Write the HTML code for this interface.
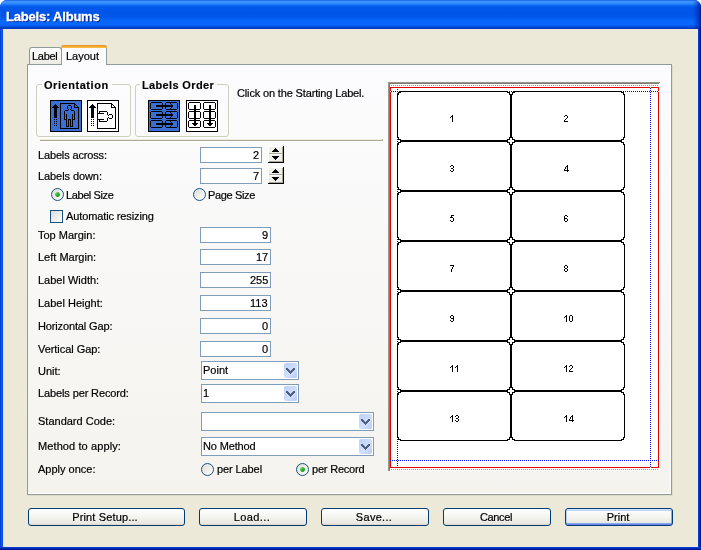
<!DOCTYPE html>
<html><head><meta charset="utf-8">
<style>
*{margin:0;padding:0;box-sizing:border-box}
html,body{width:701px;height:550px;overflow:hidden;background:#fff}
body{position:relative;font-family:"Liberation Sans",sans-serif;font-size:11px;color:#000}
.a{position:absolute}
.t{position:absolute;white-space:nowrap;line-height:13px;letter-spacing:0px;will-change:transform;-webkit-text-stroke:0.2px #000}
#win{left:0;top:0;width:701px;height:550px;background:#0846D8;border-radius:7px 7px 0 0;overflow:hidden}
#title{left:0;top:0;width:701px;height:29px;background:linear-gradient(to bottom,#0a48dc 0px,#3d95ff 1px,#3a90fd 3px,#156ff4 5px,#0058eb 7px,#0055e6 13px,#0058eb 17px,#0866fc 21px,#0866fb 25px,#004ad8 27px,#0032b4 29px)}
#face{left:3px;top:29px;width:695px;height:518px;background:#ECE9D8}
#lb{left:0;top:29px;width:3px;height:521px;background:linear-gradient(to right,#0030c8,#0a5ef0 50%,#0848dc)}
#rb{left:698px;top:29px;width:3px;height:521px;background:linear-gradient(to right,#0a46e0,#0026b4 50%,#000f8a)}
#bb{left:0;top:547px;width:701px;height:3px;background:linear-gradient(to bottom,#0a46e0,#0026b4 50%,#000f8a)}
.ttl{-webkit-text-stroke:0.3px #fff;color:#fff;font-weight:bold;font-size:13px;letter-spacing:-0.2px;text-shadow:1px 1px 0 #0a1e8c}
#panel{left:27px;top:64px;width:645px;height:431px;border:1px solid #919B9C;background:linear-gradient(to bottom,#fcfcfe,#f4f3ee);box-shadow:inset -1px -1px 0 #fff,1px 1px 0 #dedbca}
.tab{position:absolute;border:1px solid #919B9C;border-bottom:none;border-radius:3px 3px 0 0}
.grp{position:absolute;border:1px solid #D0D0BF;border-radius:3px}
.gl{position:absolute;white-space:nowrap;font-weight:bold;line-height:13px;letter-spacing:0.35px;background:#fbfbfc;padding:0 3px 0 2px;will-change:transform;-webkit-text-stroke:0.15px #000}
.edit{position:absolute;border:1px solid #7F9DB9;background:#fff;height:16px}
.ev{position:absolute;right:2px;top:1px;line-height:13px;will-change:transform;-webkit-text-stroke:0.2px #000}
.combo{position:absolute;border:1px solid #7F9DB9;background:#fff;height:19px}
.cbtn{position:absolute;right:1px;top:1px;width:13px;height:15px;border-radius:2px;background:linear-gradient(135deg,#bccff8,#d2e0fc 60%,#b3c8f5)}
.btn{position:absolute;top:508px;height:18px;border:1px solid #003C74;border-radius:3px;background:linear-gradient(to bottom,#ffffff,#f4f4f0 50%,#e9e8e1 90%,#d8d2c0);text-align:center;line-height:17px;padding-right:2px;will-change:transform;-webkit-text-stroke:0.2px #000}
.radio{position:absolute;width:13px;height:13px;border:1px solid #1C5180;border-radius:50%;background:linear-gradient(135deg,#dcdcd7,#f8f8f6 80%,#fff)}
.dot{position:absolute;left:3px;top:3px;width:5px;height:5px;clip-path:polygon(50% -15%,115% 50%,50% 115%,-15% 50%);background:linear-gradient(135deg,#8ee88e,#2fb52f 50%,#0f8f0f)}
.num{position:absolute;font-size:10px;line-height:12px;white-space:nowrap;will-change:transform;-webkit-text-stroke:0.2px #000}
</style></head><body>
<div id="win" class="a"><div id="title" class="a"></div><div id="lb" class="a"></div><div id="rb" class="a"></div><div id="bb" class="a"></div><div id="face" class="a"></div>
<div class="a" style="left:693px;top:0;width:8px;height:29px;background:linear-gradient(to right,rgba(0,30,160,0),rgba(0,30,160,.55) 70%,rgba(0,16,130,.9))"></div>
<div class="t ttl" style="left:6px;top:10px">Labels: Albums</div></div>
<div id="panel" class="a"></div>
<div class="tab" style="left:29px;top:47px;width:33px;height:17px;background:linear-gradient(to bottom,#fff,#f3f2ec 70%,#ebeae4)"></div>
<div class="t" style="left:32px;top:50px;letter-spacing:-0.3px">Label</div>
<div class="tab" style="left:61px;top:45px;width:46px;height:20px;background:#fcfcfe;border-top:none"></div>
<div class="a" style="left:61px;top:45px;width:46px;height:3px;background:linear-gradient(to bottom,#e68b2c,#ffc73c);border-radius:3px 3px 0 0"></div>
<div class="t" style="left:66px;top:50px">Layout</div>
<div class="grp" style="left:36px;top:84px;width:95px;height:53px"></div>
<div class="gl" style="left:42px;top:79px;letter-spacing:0.55px">Orientation</div>
<div class="grp" style="left:135px;top:84px;width:94px;height:53px"></div>
<div class="gl" style="left:140px;top:79px">Labels Order</div>
<!-- icons -->
<svg class="a" style="left:50px;top:100px" width="32" height="32" shape-rendering="crispEdges"><rect width="32" height="32" fill="#000"/><rect x="1" y="1" width="30" height="30" fill="#3a6fd6"/><path d="M5 4h1v1h-1zM4 5h1v1h-1zM5 5h1v1h-1zM6 5h1v1h-1zM3 6h1v1h-1zM4 6h1v1h-1zM5 6h1v1h-1zM6 6h1v1h-1zM7 6h1v1h-1zM2 7h1v1h-1zM3 7h1v1h-1zM4 7h1v1h-1zM5 7h1v1h-1zM6 7h1v1h-1zM7 7h1v1h-1zM8 7h1v1h-1zM4 8h1v1h-1zM5 8h1v1h-1zM6 8h1v1h-1zM4 9h1v1h-1zM5 9h1v1h-1zM6 9h1v1h-1zM4 10h1v1h-1zM5 10h1v1h-1zM6 10h1v1h-1zM4 11h1v1h-1zM5 11h1v1h-1zM6 11h1v1h-1zM4 12h1v1h-1zM5 12h1v1h-1zM6 12h1v1h-1zM4 13h1v1h-1zM5 13h1v1h-1zM6 13h1v1h-1zM4 14h1v1h-1zM5 14h1v1h-1zM6 14h1v1h-1zM4 15h1v1h-1zM5 15h1v1h-1zM6 15h1v1h-1zM4 16h1v1h-1zM5 16h1v1h-1zM6 16h1v1h-1zM4 17h1v1h-1zM5 17h1v1h-1zM6 17h1v1h-1zM4 19h1v1h-1zM6 19h1v1h-1zM4 21h1v1h-1zM6 21h1v1h-1zM4 23h1v1h-1zM6 23h1v1h-1zM4 25h1v1h-1zM6 25h1v1h-1zM10 3h1v1h-1zM10 4h1v1h-1zM10 5h1v1h-1zM10 6h1v1h-1zM10 7h1v1h-1zM10 8h1v1h-1zM10 9h1v1h-1zM10 10h1v1h-1zM10 11h1v1h-1zM10 12h1v1h-1zM10 13h1v1h-1zM10 14h1v1h-1zM10 15h1v1h-1zM10 16h1v1h-1zM10 17h1v1h-1zM10 18h1v1h-1zM10 19h1v1h-1zM10 20h1v1h-1zM10 21h1v1h-1zM10 22h1v1h-1zM10 23h1v1h-1zM10 24h1v1h-1zM10 25h1v1h-1zM10 26h1v1h-1zM10 27h1v1h-1zM10 28h1v1h-1zM10 3h1v1h-1zM11 3h1v1h-1zM12 3h1v1h-1zM13 3h1v1h-1zM14 3h1v1h-1zM15 3h1v1h-1zM16 3h1v1h-1zM17 3h1v1h-1zM18 3h1v1h-1zM19 3h1v1h-1zM20 3h1v1h-1zM21 3h1v1h-1zM22 3h1v1h-1zM23 3h1v1h-1zM24 3h1v1h-1zM24 3h1v1h-1zM24 4h1v1h-1zM24 5h1v1h-1zM24 6h1v1h-1zM24 7h1v1h-1zM24 7h1v1h-1zM25 7h1v1h-1zM26 7h1v1h-1zM27 7h1v1h-1zM25 4h1v1h-1zM26 5h1v1h-1zM27 6h1v1h-1zM28 7h1v1h-1zM28 8h1v1h-1zM28 9h1v1h-1zM28 10h1v1h-1zM28 11h1v1h-1zM28 12h1v1h-1zM28 13h1v1h-1zM28 14h1v1h-1zM28 15h1v1h-1zM28 16h1v1h-1zM28 17h1v1h-1zM28 18h1v1h-1zM28 19h1v1h-1zM28 20h1v1h-1zM28 21h1v1h-1zM28 22h1v1h-1zM28 23h1v1h-1zM28 24h1v1h-1zM28 25h1v1h-1zM28 26h1v1h-1zM28 27h1v1h-1zM28 28h1v1h-1zM10 28h1v1h-1zM11 28h1v1h-1zM12 28h1v1h-1zM13 28h1v1h-1zM14 28h1v1h-1zM15 28h1v1h-1zM16 28h1v1h-1zM17 28h1v1h-1zM18 28h1v1h-1zM19 28h1v1h-1zM20 28h1v1h-1zM21 28h1v1h-1zM22 28h1v1h-1zM23 28h1v1h-1zM24 28h1v1h-1zM25 28h1v1h-1zM26 28h1v1h-1zM27 28h1v1h-1zM28 28h1v1h-1zM18 5h1v1h-1zM19 5h1v1h-1zM20 5h1v1h-1zM17 6h1v1h-1zM17 7h1v1h-1zM17 8h1v1h-1zM21 6h1v1h-1zM21 7h1v1h-1zM21 8h1v1h-1zM18 9h1v1h-1zM20 9h1v1h-1zM15 10h1v1h-1zM16 10h1v1h-1zM17 10h1v1h-1zM21 10h1v1h-1zM22 10h1v1h-1zM23 10h1v1h-1zM14 11h1v1h-1zM14 12h1v1h-1zM14 13h1v1h-1zM14 14h1v1h-1zM14 15h1v1h-1zM14 16h1v1h-1zM14 17h1v1h-1zM14 18h1v1h-1zM14 19h1v1h-1zM24 11h1v1h-1zM24 12h1v1h-1zM24 13h1v1h-1zM24 14h1v1h-1zM24 15h1v1h-1zM24 16h1v1h-1zM24 17h1v1h-1zM24 18h1v1h-1zM24 19h1v1h-1zM14 19h1v1h-1zM15 19h1v1h-1zM16 19h1v1h-1zM22 19h1v1h-1zM23 19h1v1h-1zM24 19h1v1h-1zM16 14h1v1h-1zM16 15h1v1h-1zM16 16h1v1h-1zM16 17h1v1h-1zM16 18h1v1h-1zM16 19h1v1h-1zM16 20h1v1h-1zM16 21h1v1h-1zM16 22h1v1h-1zM16 23h1v1h-1zM16 24h1v1h-1zM16 25h1v1h-1zM16 26h1v1h-1zM22 14h1v1h-1zM22 15h1v1h-1zM22 16h1v1h-1zM22 17h1v1h-1zM22 18h1v1h-1zM22 19h1v1h-1zM22 20h1v1h-1zM22 21h1v1h-1zM22 22h1v1h-1zM22 23h1v1h-1zM22 24h1v1h-1zM22 25h1v1h-1zM22 26h1v1h-1zM18 19h1v1h-1zM19 19h1v1h-1zM20 19h1v1h-1zM18 19h1v1h-1zM18 20h1v1h-1zM18 21h1v1h-1zM18 22h1v1h-1zM18 23h1v1h-1zM18 24h1v1h-1zM18 25h1v1h-1zM18 26h1v1h-1zM20 19h1v1h-1zM20 20h1v1h-1zM20 21h1v1h-1zM20 22h1v1h-1zM20 23h1v1h-1zM20 24h1v1h-1zM20 25h1v1h-1zM20 26h1v1h-1zM16 26h1v1h-1zM17 26h1v1h-1zM18 26h1v1h-1zM20 26h1v1h-1zM21 26h1v1h-1zM22 26h1v1h-1z" fill="#000"/></svg>
<svg class="a" style="left:87px;top:100px" width="32" height="32" shape-rendering="crispEdges"><rect width="32" height="32" fill="#000"/><rect x="1" y="1" width="30" height="30" fill="#fff"/><path d="M5 4h1v1h-1zM4 5h1v1h-1zM5 5h1v1h-1zM6 5h1v1h-1zM3 6h1v1h-1zM4 6h1v1h-1zM5 6h1v1h-1zM6 6h1v1h-1zM7 6h1v1h-1zM2 7h1v1h-1zM3 7h1v1h-1zM4 7h1v1h-1zM5 7h1v1h-1zM6 7h1v1h-1zM7 7h1v1h-1zM8 7h1v1h-1zM4 8h1v1h-1zM5 8h1v1h-1zM6 8h1v1h-1zM4 9h1v1h-1zM5 9h1v1h-1zM6 9h1v1h-1zM4 10h1v1h-1zM5 10h1v1h-1zM6 10h1v1h-1zM4 11h1v1h-1zM5 11h1v1h-1zM6 11h1v1h-1zM4 12h1v1h-1zM5 12h1v1h-1zM6 12h1v1h-1zM4 13h1v1h-1zM5 13h1v1h-1zM6 13h1v1h-1zM4 14h1v1h-1zM5 14h1v1h-1zM6 14h1v1h-1zM4 15h1v1h-1zM5 15h1v1h-1zM6 15h1v1h-1zM4 16h1v1h-1zM5 16h1v1h-1zM6 16h1v1h-1zM4 17h1v1h-1zM5 17h1v1h-1zM6 17h1v1h-1zM4 19h1v1h-1zM6 19h1v1h-1zM4 21h1v1h-1zM6 21h1v1h-1zM4 23h1v1h-1zM6 23h1v1h-1zM4 25h1v1h-1zM6 25h1v1h-1zM10 3h1v1h-1zM10 4h1v1h-1zM10 5h1v1h-1zM10 6h1v1h-1zM10 7h1v1h-1zM10 8h1v1h-1zM10 9h1v1h-1zM10 10h1v1h-1zM10 11h1v1h-1zM10 12h1v1h-1zM10 13h1v1h-1zM10 14h1v1h-1zM10 15h1v1h-1zM10 16h1v1h-1zM10 17h1v1h-1zM10 18h1v1h-1zM10 19h1v1h-1zM10 20h1v1h-1zM10 21h1v1h-1zM10 22h1v1h-1zM10 23h1v1h-1zM10 24h1v1h-1zM10 25h1v1h-1zM10 26h1v1h-1zM10 27h1v1h-1zM10 28h1v1h-1zM10 3h1v1h-1zM11 3h1v1h-1zM12 3h1v1h-1zM13 3h1v1h-1zM14 3h1v1h-1zM15 3h1v1h-1zM16 3h1v1h-1zM17 3h1v1h-1zM18 3h1v1h-1zM19 3h1v1h-1zM20 3h1v1h-1zM21 3h1v1h-1zM22 3h1v1h-1zM23 3h1v1h-1zM24 3h1v1h-1zM24 3h1v1h-1zM24 4h1v1h-1zM24 5h1v1h-1zM24 6h1v1h-1zM24 7h1v1h-1zM24 7h1v1h-1zM25 7h1v1h-1zM26 7h1v1h-1zM27 7h1v1h-1zM25 4h1v1h-1zM26 5h1v1h-1zM27 6h1v1h-1zM28 7h1v1h-1zM28 8h1v1h-1zM28 9h1v1h-1zM28 10h1v1h-1zM28 11h1v1h-1zM28 12h1v1h-1zM28 13h1v1h-1zM28 14h1v1h-1zM28 15h1v1h-1zM28 16h1v1h-1zM28 17h1v1h-1zM28 18h1v1h-1zM28 19h1v1h-1zM28 20h1v1h-1zM28 21h1v1h-1zM28 22h1v1h-1zM28 23h1v1h-1zM28 24h1v1h-1zM28 25h1v1h-1zM28 26h1v1h-1zM28 27h1v1h-1zM28 28h1v1h-1zM10 28h1v1h-1zM11 28h1v1h-1zM12 28h1v1h-1zM13 28h1v1h-1zM14 28h1v1h-1zM15 28h1v1h-1zM16 28h1v1h-1zM17 28h1v1h-1zM18 28h1v1h-1zM19 28h1v1h-1zM20 28h1v1h-1zM21 28h1v1h-1zM22 28h1v1h-1zM23 28h1v1h-1zM24 28h1v1h-1zM25 28h1v1h-1zM26 28h1v1h-1zM27 28h1v1h-1zM28 28h1v1h-1zM12 11h1v1h-1zM13 11h1v1h-1zM14 11h1v1h-1zM15 11h1v1h-1zM16 11h1v1h-1zM17 11h1v1h-1zM18 11h1v1h-1zM19 11h1v1h-1zM12 12h1v1h-1zM20 12h1v1h-1zM11 13h1v1h-1zM12 13h1v1h-1zM13 13h1v1h-1zM14 13h1v1h-1zM15 13h1v1h-1zM16 13h1v1h-1zM20 13h1v1h-1zM20 14h1v1h-1zM22 14h1v1h-1zM23 14h1v1h-1zM24 14h1v1h-1zM21 15h1v1h-1zM25 15h1v1h-1zM25 16h1v1h-1zM21 17h1v1h-1zM25 17h1v1h-1zM20 18h1v1h-1zM22 18h1v1h-1zM23 18h1v1h-1zM24 18h1v1h-1zM11 19h1v1h-1zM12 19h1v1h-1zM13 19h1v1h-1zM14 19h1v1h-1zM15 19h1v1h-1zM16 19h1v1h-1zM20 19h1v1h-1zM12 20h1v1h-1zM20 20h1v1h-1zM12 21h1v1h-1zM13 21h1v1h-1zM14 21h1v1h-1zM15 21h1v1h-1zM16 21h1v1h-1zM17 21h1v1h-1zM18 21h1v1h-1zM19 21h1v1h-1z" fill="#000"/></svg>
<svg class="a" style="left:148px;top:100px" width="32" height="32" shape-rendering="crispEdges"><rect width="32" height="32" fill="#000"/><rect x="1" y="1" width="30" height="30" fill="#3a6fd6"/><path d="M3 2h1v1h-1zM4 2h1v1h-1zM5 2h1v1h-1zM6 2h1v1h-1zM7 2h1v1h-1zM8 2h1v1h-1zM9 2h1v1h-1zM10 2h1v1h-1zM11 2h1v1h-1zM12 2h1v1h-1zM13 2h1v1h-1zM3 9h1v1h-1zM4 9h1v1h-1zM5 9h1v1h-1zM6 9h1v1h-1zM7 9h1v1h-1zM8 9h1v1h-1zM9 9h1v1h-1zM10 9h1v1h-1zM11 9h1v1h-1zM12 9h1v1h-1zM13 9h1v1h-1zM2 3h1v1h-1zM2 4h1v1h-1zM2 5h1v1h-1zM2 6h1v1h-1zM2 7h1v1h-1zM2 8h1v1h-1zM14 3h1v1h-1zM14 4h1v1h-1zM14 5h1v1h-1zM14 6h1v1h-1zM14 7h1v1h-1zM14 8h1v1h-1zM18 2h1v1h-1zM19 2h1v1h-1zM20 2h1v1h-1zM21 2h1v1h-1zM22 2h1v1h-1zM23 2h1v1h-1zM24 2h1v1h-1zM25 2h1v1h-1zM26 2h1v1h-1zM27 2h1v1h-1zM28 2h1v1h-1zM18 9h1v1h-1zM19 9h1v1h-1zM20 9h1v1h-1zM21 9h1v1h-1zM22 9h1v1h-1zM23 9h1v1h-1zM24 9h1v1h-1zM25 9h1v1h-1zM26 9h1v1h-1zM27 9h1v1h-1zM28 9h1v1h-1zM17 3h1v1h-1zM17 4h1v1h-1zM17 5h1v1h-1zM17 6h1v1h-1zM17 7h1v1h-1zM17 8h1v1h-1zM29 3h1v1h-1zM29 4h1v1h-1zM29 5h1v1h-1zM29 6h1v1h-1zM29 7h1v1h-1zM29 8h1v1h-1zM8 5h1v1h-1zM9 5h1v1h-1zM10 5h1v1h-1zM11 5h1v1h-1zM12 5h1v1h-1zM13 5h1v1h-1zM14 5h1v1h-1zM15 5h1v1h-1zM16 5h1v1h-1zM17 5h1v1h-1zM18 5h1v1h-1zM19 5h1v1h-1zM20 5h1v1h-1zM21 5h1v1h-1zM22 5h1v1h-1zM23 5h1v1h-1zM24 5h1v1h-1zM8 6h1v1h-1zM9 6h1v1h-1zM10 6h1v1h-1zM11 6h1v1h-1zM12 6h1v1h-1zM13 6h1v1h-1zM14 6h1v1h-1zM15 6h1v1h-1zM16 6h1v1h-1zM17 6h1v1h-1zM18 6h1v1h-1zM19 6h1v1h-1zM20 6h1v1h-1zM21 6h1v1h-1zM22 6h1v1h-1zM23 6h1v1h-1zM24 6h1v1h-1zM22 3h1v1h-1zM23 4h1v1h-1zM24 5h1v1h-1zM24 6h1v1h-1zM23 7h1v1h-1zM22 8h1v1h-1zM3 11h1v1h-1zM4 11h1v1h-1zM5 11h1v1h-1zM6 11h1v1h-1zM7 11h1v1h-1zM8 11h1v1h-1zM9 11h1v1h-1zM10 11h1v1h-1zM11 11h1v1h-1zM12 11h1v1h-1zM13 11h1v1h-1zM3 18h1v1h-1zM4 18h1v1h-1zM5 18h1v1h-1zM6 18h1v1h-1zM7 18h1v1h-1zM8 18h1v1h-1zM9 18h1v1h-1zM10 18h1v1h-1zM11 18h1v1h-1zM12 18h1v1h-1zM13 18h1v1h-1zM2 12h1v1h-1zM2 13h1v1h-1zM2 14h1v1h-1zM2 15h1v1h-1zM2 16h1v1h-1zM2 17h1v1h-1zM14 12h1v1h-1zM14 13h1v1h-1zM14 14h1v1h-1zM14 15h1v1h-1zM14 16h1v1h-1zM14 17h1v1h-1zM18 11h1v1h-1zM19 11h1v1h-1zM20 11h1v1h-1zM21 11h1v1h-1zM22 11h1v1h-1zM23 11h1v1h-1zM24 11h1v1h-1zM25 11h1v1h-1zM26 11h1v1h-1zM27 11h1v1h-1zM28 11h1v1h-1zM18 18h1v1h-1zM19 18h1v1h-1zM20 18h1v1h-1zM21 18h1v1h-1zM22 18h1v1h-1zM23 18h1v1h-1zM24 18h1v1h-1zM25 18h1v1h-1zM26 18h1v1h-1zM27 18h1v1h-1zM28 18h1v1h-1zM17 12h1v1h-1zM17 13h1v1h-1zM17 14h1v1h-1zM17 15h1v1h-1zM17 16h1v1h-1zM17 17h1v1h-1zM29 12h1v1h-1zM29 13h1v1h-1zM29 14h1v1h-1zM29 15h1v1h-1zM29 16h1v1h-1zM29 17h1v1h-1zM8 14h1v1h-1zM9 14h1v1h-1zM10 14h1v1h-1zM11 14h1v1h-1zM12 14h1v1h-1zM13 14h1v1h-1zM14 14h1v1h-1zM15 14h1v1h-1zM16 14h1v1h-1zM17 14h1v1h-1zM18 14h1v1h-1zM19 14h1v1h-1zM20 14h1v1h-1zM21 14h1v1h-1zM22 14h1v1h-1zM23 14h1v1h-1zM24 14h1v1h-1zM8 15h1v1h-1zM9 15h1v1h-1zM10 15h1v1h-1zM11 15h1v1h-1zM12 15h1v1h-1zM13 15h1v1h-1zM14 15h1v1h-1zM15 15h1v1h-1zM16 15h1v1h-1zM17 15h1v1h-1zM18 15h1v1h-1zM19 15h1v1h-1zM20 15h1v1h-1zM21 15h1v1h-1zM22 15h1v1h-1zM23 15h1v1h-1zM24 15h1v1h-1zM22 12h1v1h-1zM23 13h1v1h-1zM24 14h1v1h-1zM24 15h1v1h-1zM23 16h1v1h-1zM22 17h1v1h-1zM3 20h1v1h-1zM4 20h1v1h-1zM5 20h1v1h-1zM6 20h1v1h-1zM7 20h1v1h-1zM8 20h1v1h-1zM9 20h1v1h-1zM10 20h1v1h-1zM11 20h1v1h-1zM12 20h1v1h-1zM13 20h1v1h-1zM3 27h1v1h-1zM4 27h1v1h-1zM5 27h1v1h-1zM6 27h1v1h-1zM7 27h1v1h-1zM8 27h1v1h-1zM9 27h1v1h-1zM10 27h1v1h-1zM11 27h1v1h-1zM12 27h1v1h-1zM13 27h1v1h-1zM2 21h1v1h-1zM2 22h1v1h-1zM2 23h1v1h-1zM2 24h1v1h-1zM2 25h1v1h-1zM2 26h1v1h-1zM14 21h1v1h-1zM14 22h1v1h-1zM14 23h1v1h-1zM14 24h1v1h-1zM14 25h1v1h-1zM14 26h1v1h-1zM18 20h1v1h-1zM19 20h1v1h-1zM20 20h1v1h-1zM21 20h1v1h-1zM22 20h1v1h-1zM23 20h1v1h-1zM24 20h1v1h-1zM25 20h1v1h-1zM26 20h1v1h-1zM27 20h1v1h-1zM28 20h1v1h-1zM18 27h1v1h-1zM19 27h1v1h-1zM20 27h1v1h-1zM21 27h1v1h-1zM22 27h1v1h-1zM23 27h1v1h-1zM24 27h1v1h-1zM25 27h1v1h-1zM26 27h1v1h-1zM27 27h1v1h-1zM28 27h1v1h-1zM17 21h1v1h-1zM17 22h1v1h-1zM17 23h1v1h-1zM17 24h1v1h-1zM17 25h1v1h-1zM17 26h1v1h-1zM29 21h1v1h-1zM29 22h1v1h-1zM29 23h1v1h-1zM29 24h1v1h-1zM29 25h1v1h-1zM29 26h1v1h-1zM8 23h1v1h-1zM9 23h1v1h-1zM10 23h1v1h-1zM11 23h1v1h-1zM12 23h1v1h-1zM13 23h1v1h-1zM14 23h1v1h-1zM15 23h1v1h-1zM16 23h1v1h-1zM17 23h1v1h-1zM18 23h1v1h-1zM19 23h1v1h-1zM20 23h1v1h-1zM21 23h1v1h-1zM22 23h1v1h-1zM23 23h1v1h-1zM24 23h1v1h-1zM8 24h1v1h-1zM9 24h1v1h-1zM10 24h1v1h-1zM11 24h1v1h-1zM12 24h1v1h-1zM13 24h1v1h-1zM14 24h1v1h-1zM15 24h1v1h-1zM16 24h1v1h-1zM17 24h1v1h-1zM18 24h1v1h-1zM19 24h1v1h-1zM20 24h1v1h-1zM21 24h1v1h-1zM22 24h1v1h-1zM23 24h1v1h-1zM24 24h1v1h-1zM22 21h1v1h-1zM23 22h1v1h-1zM24 23h1v1h-1zM24 24h1v1h-1zM23 25h1v1h-1zM22 26h1v1h-1z" fill="#000"/></svg>
<svg class="a" style="left:186px;top:100px" width="32" height="32" shape-rendering="crispEdges"><rect width="32" height="32" fill="#000"/><rect x="1" y="1" width="30" height="30" fill="#fff"/><path d="M3 2h1v1h-1zM4 2h1v1h-1zM5 2h1v1h-1zM6 2h1v1h-1zM7 2h1v1h-1zM8 2h1v1h-1zM9 2h1v1h-1zM10 2h1v1h-1zM11 2h1v1h-1zM12 2h1v1h-1zM13 2h1v1h-1zM3 9h1v1h-1zM4 9h1v1h-1zM5 9h1v1h-1zM6 9h1v1h-1zM7 9h1v1h-1zM8 9h1v1h-1zM9 9h1v1h-1zM10 9h1v1h-1zM11 9h1v1h-1zM12 9h1v1h-1zM13 9h1v1h-1zM2 3h1v1h-1zM2 4h1v1h-1zM2 5h1v1h-1zM2 6h1v1h-1zM2 7h1v1h-1zM2 8h1v1h-1zM14 3h1v1h-1zM14 4h1v1h-1zM14 5h1v1h-1zM14 6h1v1h-1zM14 7h1v1h-1zM14 8h1v1h-1zM3 11h1v1h-1zM4 11h1v1h-1zM5 11h1v1h-1zM6 11h1v1h-1zM7 11h1v1h-1zM8 11h1v1h-1zM9 11h1v1h-1zM10 11h1v1h-1zM11 11h1v1h-1zM12 11h1v1h-1zM13 11h1v1h-1zM3 18h1v1h-1zM4 18h1v1h-1zM5 18h1v1h-1zM6 18h1v1h-1zM7 18h1v1h-1zM8 18h1v1h-1zM9 18h1v1h-1zM10 18h1v1h-1zM11 18h1v1h-1zM12 18h1v1h-1zM13 18h1v1h-1zM2 12h1v1h-1zM2 13h1v1h-1zM2 14h1v1h-1zM2 15h1v1h-1zM2 16h1v1h-1zM2 17h1v1h-1zM14 12h1v1h-1zM14 13h1v1h-1zM14 14h1v1h-1zM14 15h1v1h-1zM14 16h1v1h-1zM14 17h1v1h-1zM3 20h1v1h-1zM4 20h1v1h-1zM5 20h1v1h-1zM6 20h1v1h-1zM7 20h1v1h-1zM8 20h1v1h-1zM9 20h1v1h-1zM10 20h1v1h-1zM11 20h1v1h-1zM12 20h1v1h-1zM13 20h1v1h-1zM3 27h1v1h-1zM4 27h1v1h-1zM5 27h1v1h-1zM6 27h1v1h-1zM7 27h1v1h-1zM8 27h1v1h-1zM9 27h1v1h-1zM10 27h1v1h-1zM11 27h1v1h-1zM12 27h1v1h-1zM13 27h1v1h-1zM2 21h1v1h-1zM2 22h1v1h-1zM2 23h1v1h-1zM2 24h1v1h-1zM2 25h1v1h-1zM2 26h1v1h-1zM14 21h1v1h-1zM14 22h1v1h-1zM14 23h1v1h-1zM14 24h1v1h-1zM14 25h1v1h-1zM14 26h1v1h-1zM8 5h1v1h-1zM8 6h1v1h-1zM8 7h1v1h-1zM8 8h1v1h-1zM8 9h1v1h-1zM8 10h1v1h-1zM8 11h1v1h-1zM8 12h1v1h-1zM8 13h1v1h-1zM8 14h1v1h-1zM8 15h1v1h-1zM8 16h1v1h-1zM8 17h1v1h-1zM8 18h1v1h-1zM8 19h1v1h-1zM8 20h1v1h-1zM8 21h1v1h-1zM8 22h1v1h-1zM8 23h1v1h-1zM9 5h1v1h-1zM9 6h1v1h-1zM9 7h1v1h-1zM9 8h1v1h-1zM9 9h1v1h-1zM9 10h1v1h-1zM9 11h1v1h-1zM9 12h1v1h-1zM9 13h1v1h-1zM9 14h1v1h-1zM9 15h1v1h-1zM9 16h1v1h-1zM9 17h1v1h-1zM9 18h1v1h-1zM9 19h1v1h-1zM9 20h1v1h-1zM9 21h1v1h-1zM9 22h1v1h-1zM9 23h1v1h-1zM6 23h1v1h-1zM7 23h1v1h-1zM8 23h1v1h-1zM9 23h1v1h-1zM10 23h1v1h-1zM11 23h1v1h-1zM7 24h1v1h-1zM8 24h1v1h-1zM9 24h1v1h-1zM10 24h1v1h-1zM8 25h1v1h-1zM9 25h1v1h-1zM18 2h1v1h-1zM19 2h1v1h-1zM20 2h1v1h-1zM21 2h1v1h-1zM22 2h1v1h-1zM23 2h1v1h-1zM24 2h1v1h-1zM25 2h1v1h-1zM26 2h1v1h-1zM27 2h1v1h-1zM28 2h1v1h-1zM18 9h1v1h-1zM19 9h1v1h-1zM20 9h1v1h-1zM21 9h1v1h-1zM22 9h1v1h-1zM23 9h1v1h-1zM24 9h1v1h-1zM25 9h1v1h-1zM26 9h1v1h-1zM27 9h1v1h-1zM28 9h1v1h-1zM17 3h1v1h-1zM17 4h1v1h-1zM17 5h1v1h-1zM17 6h1v1h-1zM17 7h1v1h-1zM17 8h1v1h-1zM29 3h1v1h-1zM29 4h1v1h-1zM29 5h1v1h-1zM29 6h1v1h-1zM29 7h1v1h-1zM29 8h1v1h-1zM18 11h1v1h-1zM19 11h1v1h-1zM20 11h1v1h-1zM21 11h1v1h-1zM22 11h1v1h-1zM23 11h1v1h-1zM24 11h1v1h-1zM25 11h1v1h-1zM26 11h1v1h-1zM27 11h1v1h-1zM28 11h1v1h-1zM18 18h1v1h-1zM19 18h1v1h-1zM20 18h1v1h-1zM21 18h1v1h-1zM22 18h1v1h-1zM23 18h1v1h-1zM24 18h1v1h-1zM25 18h1v1h-1zM26 18h1v1h-1zM27 18h1v1h-1zM28 18h1v1h-1zM17 12h1v1h-1zM17 13h1v1h-1zM17 14h1v1h-1zM17 15h1v1h-1zM17 16h1v1h-1zM17 17h1v1h-1zM29 12h1v1h-1zM29 13h1v1h-1zM29 14h1v1h-1zM29 15h1v1h-1zM29 16h1v1h-1zM29 17h1v1h-1zM18 20h1v1h-1zM19 20h1v1h-1zM20 20h1v1h-1zM21 20h1v1h-1zM22 20h1v1h-1zM23 20h1v1h-1zM24 20h1v1h-1zM25 20h1v1h-1zM26 20h1v1h-1zM27 20h1v1h-1zM28 20h1v1h-1zM18 27h1v1h-1zM19 27h1v1h-1zM20 27h1v1h-1zM21 27h1v1h-1zM22 27h1v1h-1zM23 27h1v1h-1zM24 27h1v1h-1zM25 27h1v1h-1zM26 27h1v1h-1zM27 27h1v1h-1zM28 27h1v1h-1zM17 21h1v1h-1zM17 22h1v1h-1zM17 23h1v1h-1zM17 24h1v1h-1zM17 25h1v1h-1zM17 26h1v1h-1zM29 21h1v1h-1zM29 22h1v1h-1zM29 23h1v1h-1zM29 24h1v1h-1zM29 25h1v1h-1zM29 26h1v1h-1zM23 5h1v1h-1zM23 6h1v1h-1zM23 7h1v1h-1zM23 8h1v1h-1zM23 9h1v1h-1zM23 10h1v1h-1zM23 11h1v1h-1zM23 12h1v1h-1zM23 13h1v1h-1zM23 14h1v1h-1zM23 15h1v1h-1zM23 16h1v1h-1zM23 17h1v1h-1zM23 18h1v1h-1zM23 19h1v1h-1zM23 20h1v1h-1zM23 21h1v1h-1zM23 22h1v1h-1zM23 23h1v1h-1zM24 5h1v1h-1zM24 6h1v1h-1zM24 7h1v1h-1zM24 8h1v1h-1zM24 9h1v1h-1zM24 10h1v1h-1zM24 11h1v1h-1zM24 12h1v1h-1zM24 13h1v1h-1zM24 14h1v1h-1zM24 15h1v1h-1zM24 16h1v1h-1zM24 17h1v1h-1zM24 18h1v1h-1zM24 19h1v1h-1zM24 20h1v1h-1zM24 21h1v1h-1zM24 22h1v1h-1zM24 23h1v1h-1zM21 23h1v1h-1zM22 23h1v1h-1zM23 23h1v1h-1zM24 23h1v1h-1zM25 23h1v1h-1zM26 23h1v1h-1zM22 24h1v1h-1zM23 24h1v1h-1zM24 24h1v1h-1zM25 24h1v1h-1zM23 25h1v1h-1zM24 25h1v1h-1z" fill="#000"/></svg>

<div class="t" style="left:237px;top:87px;letter-spacing:-0.15px">Click on the Starting Label.</div>
<div class="a" style="left:40px;top:139px;width:343px;height:1px;background:#efecdc"></div>
<div class="a" style="left:40px;top:140px;width:343px;height:1px;background:#aca899"></div>
<div class="a" style="left:382px;top:139px;width:1px;height:1px;background:#c4c0b0"></div>
<div class="a" style="left:40px;top:141px;width:343px;height:1px;background:#fff"></div>
<div class="t" style="left:38px;top:149px;letter-spacing:-0.15px">Labels across:</div>
<div class="t" style="left:38px;top:170px;letter-spacing:-0.08px">Labels down:</div>
<div class="t" style="left:38px;top:229px;letter-spacing:0px">Top Margin:</div>
<div class="t" style="left:38px;top:251px;letter-spacing:0px">Left Margin:</div>
<div class="t" style="left:38px;top:274px;letter-spacing:0px">Label Width:</div>
<div class="t" style="left:38px;top:297px;letter-spacing:0px">Label Height:</div>
<div class="t" style="left:38px;top:320px;letter-spacing:-0.14px">Horizontal Gap:</div>
<div class="t" style="left:38px;top:343px;letter-spacing:-0.05px">Vertical Gap:</div>
<div class="t" style="left:38px;top:365px;letter-spacing:0px">Unit:</div>
<div class="t" style="left:38px;top:387px;letter-spacing:-0.12px">Labels per Record:</div>
<div class="t" style="left:38px;top:415px;letter-spacing:0px">Standard Code:</div>
<div class="t" style="left:38px;top:440px;letter-spacing:0.1px">Method to apply:</div>
<div class="t" style="left:38px;top:463px;letter-spacing:0px">Apply once:</div>
<div class="edit" style="left:200px;top:147px;width:62px"><div class="ev">2</div></div>
<div class="edit" style="left:200px;top:168px;width:62px"><div class="ev">7</div></div>
<div class="edit" style="left:200px;top:227px;width:71px"><div class="ev">9</div></div>
<div class="edit" style="left:200px;top:249px;width:71px"><div class="ev">17</div></div>
<div class="edit" style="left:200px;top:272px;width:71px"><div class="ev">255</div></div>
<div class="edit" style="left:200px;top:295px;width:71px"><div class="ev">113</div></div>
<div class="edit" style="left:200px;top:318px;width:71px"><div class="ev">0</div></div>
<div class="edit" style="left:200px;top:341px;width:71px"><div class="ev">0</div></div>
<div class="a" style="left:268px;top:146px;width:16px;height:17px;background:#efefeb;border-top:1px solid #fff;border-left:1px solid #fff"></div>
<div class="a" style="left:283px;top:146px;width:1px;height:17px;background:#000"></div>
<div class="a" style="left:268px;top:162px;width:16px;height:1px;background:#000"></div>
<div class="a" style="left:282px;top:147px;width:1px;height:15px;background:#aca899"></div>
<div class="a" style="left:269px;top:161px;width:14px;height:1px;background:#aca899"></div>
<div class="a" style="left:269px;top:153px;width:13px;height:1px;background:#aca899"></div>
<div class="a" style="left:269px;top:154px;width:13px;height:1px;background:#fff"></div>
<svg class="a" style="left:272px;top:148px" width="8" height="13" shape-rendering="crispEdges"><path d="M3 0h1v1h-1zM2 1h3v1h-3zM1 2h5v1h-5zM0 3h7v1h-7zM0 8h7v1h-7zM1 9h5v1h-5zM2 10h3v1h-3zM3 11h1v1h-1z" fill="#000"/></svg>
<div class="a" style="left:268px;top:167px;width:16px;height:17px;background:#efefeb;border-top:1px solid #fff;border-left:1px solid #fff"></div>
<div class="a" style="left:283px;top:167px;width:1px;height:17px;background:#000"></div>
<div class="a" style="left:268px;top:183px;width:16px;height:1px;background:#000"></div>
<div class="a" style="left:282px;top:168px;width:1px;height:15px;background:#aca899"></div>
<div class="a" style="left:269px;top:182px;width:14px;height:1px;background:#aca899"></div>
<div class="a" style="left:269px;top:174px;width:13px;height:1px;background:#aca899"></div>
<div class="a" style="left:269px;top:175px;width:13px;height:1px;background:#fff"></div>
<svg class="a" style="left:272px;top:169px" width="8" height="13" shape-rendering="crispEdges"><path d="M3 0h1v1h-1zM2 1h3v1h-3zM1 2h5v1h-5zM0 3h7v1h-7zM0 8h7v1h-7zM1 9h5v1h-5zM2 10h3v1h-3zM3 11h1v1h-1z" fill="#000"/></svg>
<div class="combo" style="left:201px;top:361px;width:98px"><div class="t" style="left:1px;top:2px;letter-spacing:0px">Point</div><div class="cbtn"><svg class="a" style="left:2px;top:5px" width="9" height="6" shape-rendering="crispEdges"><path d="M0 0h2v1h-2zM7 0h2v1h-2zM0 1h3v1h-3zM6 1h3v1h-3zM1 2h3v1h-3zM5 2h3v1h-3zM2 3h5v1h-5zM3 4h3v1h-3zM4 5h1v1h-1z" fill="#4d6185"/></svg></div></div>
<div class="combo" style="left:201px;top:384px;width:98px"><div class="t" style="left:1px;top:2px;letter-spacing:0px">1</div><div class="cbtn"><svg class="a" style="left:2px;top:5px" width="9" height="6" shape-rendering="crispEdges"><path d="M0 0h2v1h-2zM7 0h2v1h-2zM0 1h3v1h-3zM6 1h3v1h-3zM1 2h3v1h-3zM5 2h3v1h-3zM2 3h5v1h-5zM3 4h3v1h-3zM4 5h1v1h-1z" fill="#4d6185"/></svg></div></div>
<div class="combo" style="left:201px;top:412px;width:173px"><div class="t" style="left:1px;top:2px;letter-spacing:0px"></div><div class="cbtn"><svg class="a" style="left:2px;top:5px" width="9" height="6" shape-rendering="crispEdges"><path d="M0 0h2v1h-2zM7 0h2v1h-2zM0 1h3v1h-3zM6 1h3v1h-3zM1 2h3v1h-3zM5 2h3v1h-3zM2 3h5v1h-5zM3 4h3v1h-3zM4 5h1v1h-1z" fill="#4d6185"/></svg></div></div>
<div class="combo" style="left:201px;top:437px;width:173px"><div class="t" style="left:1px;top:2px;letter-spacing:-0.15px">No Method</div><div class="cbtn"><svg class="a" style="left:2px;top:5px" width="9" height="6" shape-rendering="crispEdges"><path d="M0 0h2v1h-2zM7 0h2v1h-2zM0 1h3v1h-3zM6 1h3v1h-3zM1 2h3v1h-3zM5 2h3v1h-3zM2 3h5v1h-5zM3 4h3v1h-3zM4 5h1v1h-1z" fill="#4d6185"/></svg></div></div>
<div class="radio" style="left:51px;top:188px"><div class="dot"></div></div>
<div class="t" style="left:66px;top:189px;letter-spacing:-0.4px">Label Size</div>
<div class="radio" style="left:193px;top:188px"></div>
<div class="t" style="left:208px;top:189px;letter-spacing:-0.35px">Page Size</div>
<div class="a" style="left:50px;top:210px;width:13px;height:13px;border:1px solid #1C5180;background:linear-gradient(135deg,#dcdcd7,#f6f6f3 80%,#fff)"></div>
<div class="t" style="left:66px;top:210px;letter-spacing:-0.12px">Automatic resizing</div>
<div class="radio" style="left:201px;top:463px"></div>
<div class="t" style="left:217px;top:463px;letter-spacing:-0.1px">per Label</div>
<div class="radio" style="left:296px;top:463px"><div class="dot"></div></div>
<div class="t" style="left:312px;top:463px;letter-spacing:-0.2px">per Record</div>
<div class="btn" style="left:28px;width:157px;letter-spacing:0.15px;padding-right:3px">Print Setup...</div>
<div class="btn" style="left:199px;width:108px;letter-spacing:0.4px">Load...</div>
<div class="btn" style="left:321px;width:108px;letter-spacing:0.3px">Save...</div>
<div class="btn" style="left:443px;width:108px;letter-spacing:-0.35px">Cancel</div>
<div class="btn" style="left:565px;width:108px;box-shadow:inset 0 1px 0 #cee7ff,inset 0 -1px 0 #6982ee,inset 1px 0 0 #b8d0fa,inset -1px 0 0 #8ca6f2,inset 0 2px 0 #bcd4f6,inset 0 -2px 0 #8aa6f0">Print</div>
<svg class="a" style="left:386px;top:80px" width="276" height="394" shape-rendering="crispEdges"><rect x="2" y="2" width="272" height="389" fill="#fff"/><rect x="2" y="2" width="272" height="1" fill="#9a988a"/><rect x="2" y="3" width="271" height="1" fill="#7d7b6e"/><rect x="2" y="2" width="1" height="389" fill="#9a988a"/><rect x="3" y="3" width="1" height="388" fill="#7d7b6e"/><path d="M5 5h1v1h-1zM5 389h1v1h-1zM7 5h1v1h-1zM7 389h1v1h-1zM9 5h1v1h-1zM9 389h1v1h-1zM11 5h1v1h-1zM11 389h1v1h-1zM13 5h1v1h-1zM13 389h1v1h-1zM15 5h1v1h-1zM15 389h1v1h-1zM17 5h1v1h-1zM17 389h1v1h-1zM19 5h1v1h-1zM19 389h1v1h-1zM21 5h1v1h-1zM21 389h1v1h-1zM23 5h1v1h-1zM23 389h1v1h-1zM25 5h1v1h-1zM25 389h1v1h-1zM27 5h1v1h-1zM27 389h1v1h-1zM29 5h1v1h-1zM29 389h1v1h-1zM31 5h1v1h-1zM31 389h1v1h-1zM33 5h1v1h-1zM33 389h1v1h-1zM35 5h1v1h-1zM35 389h1v1h-1zM37 5h1v1h-1zM37 389h1v1h-1zM39 5h1v1h-1zM39 389h1v1h-1zM41 5h1v1h-1zM41 389h1v1h-1zM43 5h1v1h-1zM43 389h1v1h-1zM45 5h1v1h-1zM45 389h1v1h-1zM47 5h1v1h-1zM47 389h1v1h-1zM49 5h1v1h-1zM49 389h1v1h-1zM51 5h1v1h-1zM51 389h1v1h-1zM53 5h1v1h-1zM53 389h1v1h-1zM55 5h1v1h-1zM55 389h1v1h-1zM57 5h1v1h-1zM57 389h1v1h-1zM59 5h1v1h-1zM59 389h1v1h-1zM61 5h1v1h-1zM61 389h1v1h-1zM63 5h1v1h-1zM63 389h1v1h-1zM65 5h1v1h-1zM65 389h1v1h-1zM67 5h1v1h-1zM67 389h1v1h-1zM69 5h1v1h-1zM69 389h1v1h-1zM71 5h1v1h-1zM71 389h1v1h-1zM73 5h1v1h-1zM73 389h1v1h-1zM75 5h1v1h-1zM75 389h1v1h-1zM77 5h1v1h-1zM77 389h1v1h-1zM79 5h1v1h-1zM79 389h1v1h-1zM81 5h1v1h-1zM81 389h1v1h-1zM83 5h1v1h-1zM83 389h1v1h-1zM85 5h1v1h-1zM85 389h1v1h-1zM87 5h1v1h-1zM87 389h1v1h-1zM89 5h1v1h-1zM89 389h1v1h-1zM91 5h1v1h-1zM91 389h1v1h-1zM93 5h1v1h-1zM93 389h1v1h-1zM95 5h1v1h-1zM95 389h1v1h-1zM97 5h1v1h-1zM97 389h1v1h-1zM99 5h1v1h-1zM99 389h1v1h-1zM101 5h1v1h-1zM101 389h1v1h-1zM103 5h1v1h-1zM103 389h1v1h-1zM105 5h1v1h-1zM105 389h1v1h-1zM107 5h1v1h-1zM107 389h1v1h-1zM109 5h1v1h-1zM109 389h1v1h-1zM111 5h1v1h-1zM111 389h1v1h-1zM113 5h1v1h-1zM113 389h1v1h-1zM115 5h1v1h-1zM115 389h1v1h-1zM117 5h1v1h-1zM117 389h1v1h-1zM119 5h1v1h-1zM119 389h1v1h-1zM121 5h1v1h-1zM121 389h1v1h-1zM123 5h1v1h-1zM123 389h1v1h-1zM125 5h1v1h-1zM125 389h1v1h-1zM127 5h1v1h-1zM127 389h1v1h-1zM129 5h1v1h-1zM129 389h1v1h-1zM131 5h1v1h-1zM131 389h1v1h-1zM133 5h1v1h-1zM133 389h1v1h-1zM135 5h1v1h-1zM135 389h1v1h-1zM137 5h1v1h-1zM137 389h1v1h-1zM139 5h1v1h-1zM139 389h1v1h-1zM141 5h1v1h-1zM141 389h1v1h-1zM143 5h1v1h-1zM143 389h1v1h-1zM145 5h1v1h-1zM145 389h1v1h-1zM147 5h1v1h-1zM147 389h1v1h-1zM149 5h1v1h-1zM149 389h1v1h-1zM151 5h1v1h-1zM151 389h1v1h-1zM153 5h1v1h-1zM153 389h1v1h-1zM155 5h1v1h-1zM155 389h1v1h-1zM157 5h1v1h-1zM157 389h1v1h-1zM159 5h1v1h-1zM159 389h1v1h-1zM161 5h1v1h-1zM161 389h1v1h-1zM163 5h1v1h-1zM163 389h1v1h-1zM165 5h1v1h-1zM165 389h1v1h-1zM167 5h1v1h-1zM167 389h1v1h-1zM169 5h1v1h-1zM169 389h1v1h-1zM171 5h1v1h-1zM171 389h1v1h-1zM173 5h1v1h-1zM173 389h1v1h-1zM175 5h1v1h-1zM175 389h1v1h-1zM177 5h1v1h-1zM177 389h1v1h-1zM179 5h1v1h-1zM179 389h1v1h-1zM181 5h1v1h-1zM181 389h1v1h-1zM183 5h1v1h-1zM183 389h1v1h-1zM185 5h1v1h-1zM185 389h1v1h-1zM187 5h1v1h-1zM187 389h1v1h-1zM189 5h1v1h-1zM189 389h1v1h-1zM191 5h1v1h-1zM191 389h1v1h-1zM193 5h1v1h-1zM193 389h1v1h-1zM195 5h1v1h-1zM195 389h1v1h-1zM197 5h1v1h-1zM197 389h1v1h-1zM199 5h1v1h-1zM199 389h1v1h-1zM201 5h1v1h-1zM201 389h1v1h-1zM203 5h1v1h-1zM203 389h1v1h-1zM205 5h1v1h-1zM205 389h1v1h-1zM207 5h1v1h-1zM207 389h1v1h-1zM209 5h1v1h-1zM209 389h1v1h-1zM211 5h1v1h-1zM211 389h1v1h-1zM213 5h1v1h-1zM213 389h1v1h-1zM215 5h1v1h-1zM215 389h1v1h-1zM217 5h1v1h-1zM217 389h1v1h-1zM219 5h1v1h-1zM219 389h1v1h-1zM221 5h1v1h-1zM221 389h1v1h-1zM223 5h1v1h-1zM223 389h1v1h-1zM225 5h1v1h-1zM225 389h1v1h-1zM227 5h1v1h-1zM227 389h1v1h-1zM229 5h1v1h-1zM229 389h1v1h-1zM231 5h1v1h-1zM231 389h1v1h-1zM233 5h1v1h-1zM233 389h1v1h-1zM235 5h1v1h-1zM235 389h1v1h-1zM237 5h1v1h-1zM237 389h1v1h-1zM239 5h1v1h-1zM239 389h1v1h-1zM241 5h1v1h-1zM241 389h1v1h-1zM243 5h1v1h-1zM243 389h1v1h-1zM245 5h1v1h-1zM245 389h1v1h-1zM247 5h1v1h-1zM247 389h1v1h-1zM249 5h1v1h-1zM249 389h1v1h-1zM251 5h1v1h-1zM251 389h1v1h-1zM253 5h1v1h-1zM253 389h1v1h-1zM255 5h1v1h-1zM255 389h1v1h-1zM257 5h1v1h-1zM257 389h1v1h-1zM259 5h1v1h-1zM259 389h1v1h-1zM261 5h1v1h-1zM261 389h1v1h-1zM263 5h1v1h-1zM263 389h1v1h-1zM265 5h1v1h-1zM265 389h1v1h-1zM267 5h1v1h-1zM267 389h1v1h-1zM269 5h1v1h-1zM269 389h1v1h-1zM271 5h1v1h-1zM271 389h1v1h-1z" fill="#1ec3f0"/><rect x="4" y="7" width="269" height="1" fill="#e60000"/><rect x="4" y="387" width="269" height="1" fill="#e60000"/><rect x="4" y="7" width="1" height="381" fill="#e60000"/><rect x="272" y="7" width="1" height="381" fill="#e60000"/><path d="M4 11h1v1h-1zM5 380h1v1h-1zM6 11h1v1h-1zM7 380h1v1h-1zM8 11h1v1h-1zM9 380h1v1h-1zM10 11h1v1h-1zM11 380h1v1h-1zM12 11h1v1h-1zM13 380h1v1h-1zM14 11h1v1h-1zM15 380h1v1h-1zM16 11h1v1h-1zM17 380h1v1h-1zM18 11h1v1h-1zM19 380h1v1h-1zM20 11h1v1h-1zM21 380h1v1h-1zM22 11h1v1h-1zM23 380h1v1h-1zM24 11h1v1h-1zM25 380h1v1h-1zM26 11h1v1h-1zM27 380h1v1h-1zM28 11h1v1h-1zM29 380h1v1h-1zM30 11h1v1h-1zM31 380h1v1h-1zM32 11h1v1h-1zM33 380h1v1h-1zM34 11h1v1h-1zM35 380h1v1h-1zM36 11h1v1h-1zM37 380h1v1h-1zM38 11h1v1h-1zM39 380h1v1h-1zM40 11h1v1h-1zM41 380h1v1h-1zM42 11h1v1h-1zM43 380h1v1h-1zM44 11h1v1h-1zM45 380h1v1h-1zM46 11h1v1h-1zM47 380h1v1h-1zM48 11h1v1h-1zM49 380h1v1h-1zM50 11h1v1h-1zM51 380h1v1h-1zM52 11h1v1h-1zM53 380h1v1h-1zM54 11h1v1h-1zM55 380h1v1h-1zM56 11h1v1h-1zM57 380h1v1h-1zM58 11h1v1h-1zM59 380h1v1h-1zM60 11h1v1h-1zM61 380h1v1h-1zM62 11h1v1h-1zM63 380h1v1h-1zM64 11h1v1h-1zM65 380h1v1h-1zM66 11h1v1h-1zM67 380h1v1h-1zM68 11h1v1h-1zM69 380h1v1h-1zM70 11h1v1h-1zM71 380h1v1h-1zM72 11h1v1h-1zM73 380h1v1h-1zM74 11h1v1h-1zM75 380h1v1h-1zM76 11h1v1h-1zM77 380h1v1h-1zM78 11h1v1h-1zM79 380h1v1h-1zM80 11h1v1h-1zM81 380h1v1h-1zM82 11h1v1h-1zM83 380h1v1h-1zM84 11h1v1h-1zM85 380h1v1h-1zM86 11h1v1h-1zM87 380h1v1h-1zM88 11h1v1h-1zM89 380h1v1h-1zM90 11h1v1h-1zM91 380h1v1h-1zM92 11h1v1h-1zM93 380h1v1h-1zM94 11h1v1h-1zM95 380h1v1h-1zM96 11h1v1h-1zM97 380h1v1h-1zM98 11h1v1h-1zM99 380h1v1h-1zM100 11h1v1h-1zM101 380h1v1h-1zM102 11h1v1h-1zM103 380h1v1h-1zM104 11h1v1h-1zM105 380h1v1h-1zM106 11h1v1h-1zM107 380h1v1h-1zM108 11h1v1h-1zM109 380h1v1h-1zM110 11h1v1h-1zM111 380h1v1h-1zM112 11h1v1h-1zM113 380h1v1h-1zM114 11h1v1h-1zM115 380h1v1h-1zM116 11h1v1h-1zM117 380h1v1h-1zM118 11h1v1h-1zM119 380h1v1h-1zM120 11h1v1h-1zM121 380h1v1h-1zM122 11h1v1h-1zM123 380h1v1h-1zM124 11h1v1h-1zM125 380h1v1h-1zM126 11h1v1h-1zM127 380h1v1h-1zM128 11h1v1h-1zM129 380h1v1h-1zM130 11h1v1h-1zM131 380h1v1h-1zM132 11h1v1h-1zM133 380h1v1h-1zM134 11h1v1h-1zM135 380h1v1h-1zM136 11h1v1h-1zM137 380h1v1h-1zM138 11h1v1h-1zM139 380h1v1h-1zM140 11h1v1h-1zM141 380h1v1h-1zM142 11h1v1h-1zM143 380h1v1h-1zM144 11h1v1h-1zM145 380h1v1h-1zM146 11h1v1h-1zM147 380h1v1h-1zM148 11h1v1h-1zM149 380h1v1h-1zM150 11h1v1h-1zM151 380h1v1h-1zM152 11h1v1h-1zM153 380h1v1h-1zM154 11h1v1h-1zM155 380h1v1h-1zM156 11h1v1h-1zM157 380h1v1h-1zM158 11h1v1h-1zM159 380h1v1h-1zM160 11h1v1h-1zM161 380h1v1h-1zM162 11h1v1h-1zM163 380h1v1h-1zM164 11h1v1h-1zM165 380h1v1h-1zM166 11h1v1h-1zM167 380h1v1h-1zM168 11h1v1h-1zM169 380h1v1h-1zM170 11h1v1h-1zM171 380h1v1h-1zM172 11h1v1h-1zM173 380h1v1h-1zM174 11h1v1h-1zM175 380h1v1h-1zM176 11h1v1h-1zM177 380h1v1h-1zM178 11h1v1h-1zM179 380h1v1h-1zM180 11h1v1h-1zM181 380h1v1h-1zM182 11h1v1h-1zM183 380h1v1h-1zM184 11h1v1h-1zM185 380h1v1h-1zM186 11h1v1h-1zM187 380h1v1h-1zM188 11h1v1h-1zM189 380h1v1h-1zM190 11h1v1h-1zM191 380h1v1h-1zM192 11h1v1h-1zM193 380h1v1h-1zM194 11h1v1h-1zM195 380h1v1h-1zM196 11h1v1h-1zM197 380h1v1h-1zM198 11h1v1h-1zM199 380h1v1h-1zM200 11h1v1h-1zM201 380h1v1h-1zM202 11h1v1h-1zM203 380h1v1h-1zM204 11h1v1h-1zM205 380h1v1h-1zM206 11h1v1h-1zM207 380h1v1h-1zM208 11h1v1h-1zM209 380h1v1h-1zM210 11h1v1h-1zM211 380h1v1h-1zM212 11h1v1h-1zM213 380h1v1h-1zM214 11h1v1h-1zM215 380h1v1h-1zM216 11h1v1h-1zM217 380h1v1h-1zM218 11h1v1h-1zM219 380h1v1h-1zM220 11h1v1h-1zM221 380h1v1h-1zM222 11h1v1h-1zM223 380h1v1h-1zM224 11h1v1h-1zM225 380h1v1h-1zM226 11h1v1h-1zM227 380h1v1h-1zM228 11h1v1h-1zM229 380h1v1h-1zM230 11h1v1h-1zM231 380h1v1h-1zM232 11h1v1h-1zM233 380h1v1h-1zM234 11h1v1h-1zM235 380h1v1h-1zM236 11h1v1h-1zM237 380h1v1h-1zM238 11h1v1h-1zM239 380h1v1h-1zM240 11h1v1h-1zM241 380h1v1h-1zM242 11h1v1h-1zM243 380h1v1h-1zM244 11h1v1h-1zM245 380h1v1h-1zM246 11h1v1h-1zM247 380h1v1h-1zM248 11h1v1h-1zM249 380h1v1h-1zM250 11h1v1h-1zM251 380h1v1h-1zM252 11h1v1h-1zM253 380h1v1h-1zM254 11h1v1h-1zM255 380h1v1h-1zM256 11h1v1h-1zM257 380h1v1h-1zM258 11h1v1h-1zM259 380h1v1h-1zM260 11h1v1h-1zM261 380h1v1h-1zM262 11h1v1h-1zM263 380h1v1h-1zM264 11h1v1h-1zM265 380h1v1h-1zM266 11h1v1h-1zM267 380h1v1h-1zM268 11h1v1h-1zM269 380h1v1h-1zM270 11h1v1h-1zM271 380h1v1h-1zM272 11h1v1h-1zM264 7h1v1h-1zM11 8h1v1h-1zM264 9h1v1h-1zM11 10h1v1h-1zM264 11h1v1h-1zM11 12h1v1h-1zM264 13h1v1h-1zM11 14h1v1h-1zM264 15h1v1h-1zM11 16h1v1h-1zM264 17h1v1h-1zM11 18h1v1h-1zM264 19h1v1h-1zM11 20h1v1h-1zM264 21h1v1h-1zM11 22h1v1h-1zM264 23h1v1h-1zM11 24h1v1h-1zM264 25h1v1h-1zM11 26h1v1h-1zM264 27h1v1h-1zM11 28h1v1h-1zM264 29h1v1h-1zM11 30h1v1h-1zM264 31h1v1h-1zM11 32h1v1h-1zM264 33h1v1h-1zM11 34h1v1h-1zM264 35h1v1h-1zM11 36h1v1h-1zM264 37h1v1h-1zM11 38h1v1h-1zM264 39h1v1h-1zM11 40h1v1h-1zM264 41h1v1h-1zM11 42h1v1h-1zM264 43h1v1h-1zM11 44h1v1h-1zM264 45h1v1h-1zM11 46h1v1h-1zM264 47h1v1h-1zM11 48h1v1h-1zM264 49h1v1h-1zM11 50h1v1h-1zM264 51h1v1h-1zM11 52h1v1h-1zM264 53h1v1h-1zM11 54h1v1h-1zM264 55h1v1h-1zM11 56h1v1h-1zM264 57h1v1h-1zM11 58h1v1h-1zM264 59h1v1h-1zM11 60h1v1h-1zM264 61h1v1h-1zM11 62h1v1h-1zM264 63h1v1h-1zM11 64h1v1h-1zM264 65h1v1h-1zM11 66h1v1h-1zM264 67h1v1h-1zM11 68h1v1h-1zM264 69h1v1h-1zM11 70h1v1h-1zM264 71h1v1h-1zM11 72h1v1h-1zM264 73h1v1h-1zM11 74h1v1h-1zM264 75h1v1h-1zM11 76h1v1h-1zM264 77h1v1h-1zM11 78h1v1h-1zM264 79h1v1h-1zM11 80h1v1h-1zM264 81h1v1h-1zM11 82h1v1h-1zM264 83h1v1h-1zM11 84h1v1h-1zM264 85h1v1h-1zM11 86h1v1h-1zM264 87h1v1h-1zM11 88h1v1h-1zM264 89h1v1h-1zM11 90h1v1h-1zM264 91h1v1h-1zM11 92h1v1h-1zM264 93h1v1h-1zM11 94h1v1h-1zM264 95h1v1h-1zM11 96h1v1h-1zM264 97h1v1h-1zM11 98h1v1h-1zM264 99h1v1h-1zM11 100h1v1h-1zM264 101h1v1h-1zM11 102h1v1h-1zM264 103h1v1h-1zM11 104h1v1h-1zM264 105h1v1h-1zM11 106h1v1h-1zM264 107h1v1h-1zM11 108h1v1h-1zM264 109h1v1h-1zM11 110h1v1h-1zM264 111h1v1h-1zM11 112h1v1h-1zM264 113h1v1h-1zM11 114h1v1h-1zM264 115h1v1h-1zM11 116h1v1h-1zM264 117h1v1h-1zM11 118h1v1h-1zM264 119h1v1h-1zM11 120h1v1h-1zM264 121h1v1h-1zM11 122h1v1h-1zM264 123h1v1h-1zM11 124h1v1h-1zM264 125h1v1h-1zM11 126h1v1h-1zM264 127h1v1h-1zM11 128h1v1h-1zM264 129h1v1h-1zM11 130h1v1h-1zM264 131h1v1h-1zM11 132h1v1h-1zM264 133h1v1h-1zM11 134h1v1h-1zM264 135h1v1h-1zM11 136h1v1h-1zM264 137h1v1h-1zM11 138h1v1h-1zM264 139h1v1h-1zM11 140h1v1h-1zM264 141h1v1h-1zM11 142h1v1h-1zM264 143h1v1h-1zM11 144h1v1h-1zM264 145h1v1h-1zM11 146h1v1h-1zM264 147h1v1h-1zM11 148h1v1h-1zM264 149h1v1h-1zM11 150h1v1h-1zM264 151h1v1h-1zM11 152h1v1h-1zM264 153h1v1h-1zM11 154h1v1h-1zM264 155h1v1h-1zM11 156h1v1h-1zM264 157h1v1h-1zM11 158h1v1h-1zM264 159h1v1h-1zM11 160h1v1h-1zM264 161h1v1h-1zM11 162h1v1h-1zM264 163h1v1h-1zM11 164h1v1h-1zM264 165h1v1h-1zM11 166h1v1h-1zM264 167h1v1h-1zM11 168h1v1h-1zM264 169h1v1h-1zM11 170h1v1h-1zM264 171h1v1h-1zM11 172h1v1h-1zM264 173h1v1h-1zM11 174h1v1h-1zM264 175h1v1h-1zM11 176h1v1h-1zM264 177h1v1h-1zM11 178h1v1h-1zM264 179h1v1h-1zM11 180h1v1h-1zM264 181h1v1h-1zM11 182h1v1h-1zM264 183h1v1h-1zM11 184h1v1h-1zM264 185h1v1h-1zM11 186h1v1h-1zM264 187h1v1h-1zM11 188h1v1h-1zM264 189h1v1h-1zM11 190h1v1h-1zM264 191h1v1h-1zM11 192h1v1h-1zM264 193h1v1h-1zM11 194h1v1h-1zM264 195h1v1h-1zM11 196h1v1h-1zM264 197h1v1h-1zM11 198h1v1h-1zM264 199h1v1h-1zM11 200h1v1h-1zM264 201h1v1h-1zM11 202h1v1h-1zM264 203h1v1h-1zM11 204h1v1h-1zM264 205h1v1h-1zM11 206h1v1h-1zM264 207h1v1h-1zM11 208h1v1h-1zM264 209h1v1h-1zM11 210h1v1h-1zM264 211h1v1h-1zM11 212h1v1h-1zM264 213h1v1h-1zM11 214h1v1h-1zM264 215h1v1h-1zM11 216h1v1h-1zM264 217h1v1h-1zM11 218h1v1h-1zM264 219h1v1h-1zM11 220h1v1h-1zM264 221h1v1h-1zM11 222h1v1h-1zM264 223h1v1h-1zM11 224h1v1h-1zM264 225h1v1h-1zM11 226h1v1h-1zM264 227h1v1h-1zM11 228h1v1h-1zM264 229h1v1h-1zM11 230h1v1h-1zM264 231h1v1h-1zM11 232h1v1h-1zM264 233h1v1h-1zM11 234h1v1h-1zM264 235h1v1h-1zM11 236h1v1h-1zM264 237h1v1h-1zM11 238h1v1h-1zM264 239h1v1h-1zM11 240h1v1h-1zM264 241h1v1h-1zM11 242h1v1h-1zM264 243h1v1h-1zM11 244h1v1h-1zM264 245h1v1h-1zM11 246h1v1h-1zM264 247h1v1h-1zM11 248h1v1h-1zM264 249h1v1h-1zM11 250h1v1h-1zM264 251h1v1h-1zM11 252h1v1h-1zM264 253h1v1h-1zM11 254h1v1h-1zM264 255h1v1h-1zM11 256h1v1h-1zM264 257h1v1h-1zM11 258h1v1h-1zM264 259h1v1h-1zM11 260h1v1h-1zM264 261h1v1h-1zM11 262h1v1h-1zM264 263h1v1h-1zM11 264h1v1h-1zM264 265h1v1h-1zM11 266h1v1h-1zM264 267h1v1h-1zM11 268h1v1h-1zM264 269h1v1h-1zM11 270h1v1h-1zM264 271h1v1h-1zM11 272h1v1h-1zM264 273h1v1h-1zM11 274h1v1h-1zM264 275h1v1h-1zM11 276h1v1h-1zM264 277h1v1h-1zM11 278h1v1h-1zM264 279h1v1h-1zM11 280h1v1h-1zM264 281h1v1h-1zM11 282h1v1h-1zM264 283h1v1h-1zM11 284h1v1h-1zM264 285h1v1h-1zM11 286h1v1h-1zM264 287h1v1h-1zM11 288h1v1h-1zM264 289h1v1h-1zM11 290h1v1h-1zM264 291h1v1h-1zM11 292h1v1h-1zM264 293h1v1h-1zM11 294h1v1h-1zM264 295h1v1h-1zM11 296h1v1h-1zM264 297h1v1h-1zM11 298h1v1h-1zM264 299h1v1h-1zM11 300h1v1h-1zM264 301h1v1h-1zM11 302h1v1h-1zM264 303h1v1h-1zM11 304h1v1h-1zM264 305h1v1h-1zM11 306h1v1h-1zM264 307h1v1h-1zM11 308h1v1h-1zM264 309h1v1h-1zM11 310h1v1h-1zM264 311h1v1h-1zM11 312h1v1h-1zM264 313h1v1h-1zM11 314h1v1h-1zM264 315h1v1h-1zM11 316h1v1h-1zM264 317h1v1h-1zM11 318h1v1h-1zM264 319h1v1h-1zM11 320h1v1h-1zM264 321h1v1h-1zM11 322h1v1h-1zM264 323h1v1h-1zM11 324h1v1h-1zM264 325h1v1h-1zM11 326h1v1h-1zM264 327h1v1h-1zM11 328h1v1h-1zM264 329h1v1h-1zM11 330h1v1h-1zM264 331h1v1h-1zM11 332h1v1h-1zM264 333h1v1h-1zM11 334h1v1h-1zM264 335h1v1h-1zM11 336h1v1h-1zM264 337h1v1h-1zM11 338h1v1h-1zM264 339h1v1h-1zM11 340h1v1h-1zM264 341h1v1h-1zM11 342h1v1h-1zM264 343h1v1h-1zM11 344h1v1h-1zM264 345h1v1h-1zM11 346h1v1h-1zM264 347h1v1h-1zM11 348h1v1h-1zM264 349h1v1h-1zM11 350h1v1h-1zM264 351h1v1h-1zM11 352h1v1h-1zM264 353h1v1h-1zM11 354h1v1h-1zM264 355h1v1h-1zM11 356h1v1h-1zM264 357h1v1h-1zM11 358h1v1h-1zM264 359h1v1h-1zM11 360h1v1h-1zM264 361h1v1h-1zM11 362h1v1h-1zM264 363h1v1h-1zM11 364h1v1h-1zM264 365h1v1h-1zM11 366h1v1h-1zM264 367h1v1h-1zM11 368h1v1h-1zM264 369h1v1h-1zM11 370h1v1h-1zM264 371h1v1h-1zM11 372h1v1h-1zM264 373h1v1h-1zM11 374h1v1h-1zM264 375h1v1h-1zM11 376h1v1h-1zM264 377h1v1h-1zM11 378h1v1h-1zM264 379h1v1h-1zM11 380h1v1h-1zM264 381h1v1h-1zM11 382h1v1h-1zM264 383h1v1h-1zM11 384h1v1h-1zM264 385h1v1h-1zM11 386h1v1h-1zM264 387h1v1h-1z" fill="#fff"/><path d="M4 380h1v1h-1zM5 11h1v1h-1zM6 380h1v1h-1zM7 11h1v1h-1zM8 380h1v1h-1zM9 11h1v1h-1zM10 380h1v1h-1zM11 11h1v1h-1zM12 380h1v1h-1zM13 11h1v1h-1zM14 380h1v1h-1zM15 11h1v1h-1zM16 380h1v1h-1zM17 11h1v1h-1zM18 380h1v1h-1zM19 11h1v1h-1zM20 380h1v1h-1zM21 11h1v1h-1zM22 380h1v1h-1zM23 11h1v1h-1zM24 380h1v1h-1zM25 11h1v1h-1zM26 380h1v1h-1zM27 11h1v1h-1zM28 380h1v1h-1zM29 11h1v1h-1zM30 380h1v1h-1zM31 11h1v1h-1zM32 380h1v1h-1zM33 11h1v1h-1zM34 380h1v1h-1zM35 11h1v1h-1zM36 380h1v1h-1zM37 11h1v1h-1zM38 380h1v1h-1zM39 11h1v1h-1zM40 380h1v1h-1zM41 11h1v1h-1zM42 380h1v1h-1zM43 11h1v1h-1zM44 380h1v1h-1zM45 11h1v1h-1zM46 380h1v1h-1zM47 11h1v1h-1zM48 380h1v1h-1zM49 11h1v1h-1zM50 380h1v1h-1zM51 11h1v1h-1zM52 380h1v1h-1zM53 11h1v1h-1zM54 380h1v1h-1zM55 11h1v1h-1zM56 380h1v1h-1zM57 11h1v1h-1zM58 380h1v1h-1zM59 11h1v1h-1zM60 380h1v1h-1zM61 11h1v1h-1zM62 380h1v1h-1zM63 11h1v1h-1zM64 380h1v1h-1zM65 11h1v1h-1zM66 380h1v1h-1zM67 11h1v1h-1zM68 380h1v1h-1zM69 11h1v1h-1zM70 380h1v1h-1zM71 11h1v1h-1zM72 380h1v1h-1zM73 11h1v1h-1zM74 380h1v1h-1zM75 11h1v1h-1zM76 380h1v1h-1zM77 11h1v1h-1zM78 380h1v1h-1zM79 11h1v1h-1zM80 380h1v1h-1zM81 11h1v1h-1zM82 380h1v1h-1zM83 11h1v1h-1zM84 380h1v1h-1zM85 11h1v1h-1zM86 380h1v1h-1zM87 11h1v1h-1zM88 380h1v1h-1zM89 11h1v1h-1zM90 380h1v1h-1zM91 11h1v1h-1zM92 380h1v1h-1zM93 11h1v1h-1zM94 380h1v1h-1zM95 11h1v1h-1zM96 380h1v1h-1zM97 11h1v1h-1zM98 380h1v1h-1zM99 11h1v1h-1zM100 380h1v1h-1zM101 11h1v1h-1zM102 380h1v1h-1zM103 11h1v1h-1zM104 380h1v1h-1zM105 11h1v1h-1zM106 380h1v1h-1zM107 11h1v1h-1zM108 380h1v1h-1zM109 11h1v1h-1zM110 380h1v1h-1zM111 11h1v1h-1zM112 380h1v1h-1zM113 11h1v1h-1zM114 380h1v1h-1zM115 11h1v1h-1zM116 380h1v1h-1zM117 11h1v1h-1zM118 380h1v1h-1zM119 11h1v1h-1zM120 380h1v1h-1zM121 11h1v1h-1zM122 380h1v1h-1zM123 11h1v1h-1zM124 380h1v1h-1zM125 11h1v1h-1zM126 380h1v1h-1zM127 11h1v1h-1zM128 380h1v1h-1zM129 11h1v1h-1zM130 380h1v1h-1zM131 11h1v1h-1zM132 380h1v1h-1zM133 11h1v1h-1zM134 380h1v1h-1zM135 11h1v1h-1zM136 380h1v1h-1zM137 11h1v1h-1zM138 380h1v1h-1zM139 11h1v1h-1zM140 380h1v1h-1zM141 11h1v1h-1zM142 380h1v1h-1zM143 11h1v1h-1zM144 380h1v1h-1zM145 11h1v1h-1zM146 380h1v1h-1zM147 11h1v1h-1zM148 380h1v1h-1zM149 11h1v1h-1zM150 380h1v1h-1zM151 11h1v1h-1zM152 380h1v1h-1zM153 11h1v1h-1zM154 380h1v1h-1zM155 11h1v1h-1zM156 380h1v1h-1zM157 11h1v1h-1zM158 380h1v1h-1zM159 11h1v1h-1zM160 380h1v1h-1zM161 11h1v1h-1zM162 380h1v1h-1zM163 11h1v1h-1zM164 380h1v1h-1zM165 11h1v1h-1zM166 380h1v1h-1zM167 11h1v1h-1zM168 380h1v1h-1zM169 11h1v1h-1zM170 380h1v1h-1zM171 11h1v1h-1zM172 380h1v1h-1zM173 11h1v1h-1zM174 380h1v1h-1zM175 11h1v1h-1zM176 380h1v1h-1zM177 11h1v1h-1zM178 380h1v1h-1zM179 11h1v1h-1zM180 380h1v1h-1zM181 11h1v1h-1zM182 380h1v1h-1zM183 11h1v1h-1zM184 380h1v1h-1zM185 11h1v1h-1zM186 380h1v1h-1zM187 11h1v1h-1zM188 380h1v1h-1zM189 11h1v1h-1zM190 380h1v1h-1zM191 11h1v1h-1zM192 380h1v1h-1zM193 11h1v1h-1zM194 380h1v1h-1zM195 11h1v1h-1zM196 380h1v1h-1zM197 11h1v1h-1zM198 380h1v1h-1zM199 11h1v1h-1zM200 380h1v1h-1zM201 11h1v1h-1zM202 380h1v1h-1zM203 11h1v1h-1zM204 380h1v1h-1zM205 11h1v1h-1zM206 380h1v1h-1zM207 11h1v1h-1zM208 380h1v1h-1zM209 11h1v1h-1zM210 380h1v1h-1zM211 11h1v1h-1zM212 380h1v1h-1zM213 11h1v1h-1zM214 380h1v1h-1zM215 11h1v1h-1zM216 380h1v1h-1zM217 11h1v1h-1zM218 380h1v1h-1zM219 11h1v1h-1zM220 380h1v1h-1zM221 11h1v1h-1zM222 380h1v1h-1zM223 11h1v1h-1zM224 380h1v1h-1zM225 11h1v1h-1zM226 380h1v1h-1zM227 11h1v1h-1zM228 380h1v1h-1zM229 11h1v1h-1zM230 380h1v1h-1zM231 11h1v1h-1zM232 380h1v1h-1zM233 11h1v1h-1zM234 380h1v1h-1zM235 11h1v1h-1zM236 380h1v1h-1zM237 11h1v1h-1zM238 380h1v1h-1zM239 11h1v1h-1zM240 380h1v1h-1zM241 11h1v1h-1zM242 380h1v1h-1zM243 11h1v1h-1zM244 380h1v1h-1zM245 11h1v1h-1zM246 380h1v1h-1zM247 11h1v1h-1zM248 380h1v1h-1zM249 11h1v1h-1zM250 380h1v1h-1zM251 11h1v1h-1zM252 380h1v1h-1zM253 11h1v1h-1zM254 380h1v1h-1zM255 11h1v1h-1zM256 380h1v1h-1zM257 11h1v1h-1zM258 380h1v1h-1zM259 11h1v1h-1zM260 380h1v1h-1zM261 11h1v1h-1zM262 380h1v1h-1zM263 11h1v1h-1zM264 380h1v1h-1zM265 11h1v1h-1zM266 380h1v1h-1zM267 11h1v1h-1zM268 380h1v1h-1zM269 11h1v1h-1zM270 380h1v1h-1zM271 11h1v1h-1zM272 380h1v1h-1zM11 7h1v1h-1zM264 8h1v1h-1zM11 9h1v1h-1zM264 10h1v1h-1zM11 11h1v1h-1zM264 12h1v1h-1zM11 13h1v1h-1zM264 14h1v1h-1zM11 15h1v1h-1zM264 16h1v1h-1zM11 17h1v1h-1zM264 18h1v1h-1zM11 19h1v1h-1zM264 20h1v1h-1zM11 21h1v1h-1zM264 22h1v1h-1zM11 23h1v1h-1zM264 24h1v1h-1zM11 25h1v1h-1zM264 26h1v1h-1zM11 27h1v1h-1zM264 28h1v1h-1zM11 29h1v1h-1zM264 30h1v1h-1zM11 31h1v1h-1zM264 32h1v1h-1zM11 33h1v1h-1zM264 34h1v1h-1zM11 35h1v1h-1zM264 36h1v1h-1zM11 37h1v1h-1zM264 38h1v1h-1zM11 39h1v1h-1zM264 40h1v1h-1zM11 41h1v1h-1zM264 42h1v1h-1zM11 43h1v1h-1zM264 44h1v1h-1zM11 45h1v1h-1zM264 46h1v1h-1zM11 47h1v1h-1zM264 48h1v1h-1zM11 49h1v1h-1zM264 50h1v1h-1zM11 51h1v1h-1zM264 52h1v1h-1zM11 53h1v1h-1zM264 54h1v1h-1zM11 55h1v1h-1zM264 56h1v1h-1zM11 57h1v1h-1zM264 58h1v1h-1zM11 59h1v1h-1zM264 60h1v1h-1zM11 61h1v1h-1zM264 62h1v1h-1zM11 63h1v1h-1zM264 64h1v1h-1zM11 65h1v1h-1zM264 66h1v1h-1zM11 67h1v1h-1zM264 68h1v1h-1zM11 69h1v1h-1zM264 70h1v1h-1zM11 71h1v1h-1zM264 72h1v1h-1zM11 73h1v1h-1zM264 74h1v1h-1zM11 75h1v1h-1zM264 76h1v1h-1zM11 77h1v1h-1zM264 78h1v1h-1zM11 79h1v1h-1zM264 80h1v1h-1zM11 81h1v1h-1zM264 82h1v1h-1zM11 83h1v1h-1zM264 84h1v1h-1zM11 85h1v1h-1zM264 86h1v1h-1zM11 87h1v1h-1zM264 88h1v1h-1zM11 89h1v1h-1zM264 90h1v1h-1zM11 91h1v1h-1zM264 92h1v1h-1zM11 93h1v1h-1zM264 94h1v1h-1zM11 95h1v1h-1zM264 96h1v1h-1zM11 97h1v1h-1zM264 98h1v1h-1zM11 99h1v1h-1zM264 100h1v1h-1zM11 101h1v1h-1zM264 102h1v1h-1zM11 103h1v1h-1zM264 104h1v1h-1zM11 105h1v1h-1zM264 106h1v1h-1zM11 107h1v1h-1zM264 108h1v1h-1zM11 109h1v1h-1zM264 110h1v1h-1zM11 111h1v1h-1zM264 112h1v1h-1zM11 113h1v1h-1zM264 114h1v1h-1zM11 115h1v1h-1zM264 116h1v1h-1zM11 117h1v1h-1zM264 118h1v1h-1zM11 119h1v1h-1zM264 120h1v1h-1zM11 121h1v1h-1zM264 122h1v1h-1zM11 123h1v1h-1zM264 124h1v1h-1zM11 125h1v1h-1zM264 126h1v1h-1zM11 127h1v1h-1zM264 128h1v1h-1zM11 129h1v1h-1zM264 130h1v1h-1zM11 131h1v1h-1zM264 132h1v1h-1zM11 133h1v1h-1zM264 134h1v1h-1zM11 135h1v1h-1zM264 136h1v1h-1zM11 137h1v1h-1zM264 138h1v1h-1zM11 139h1v1h-1zM264 140h1v1h-1zM11 141h1v1h-1zM264 142h1v1h-1zM11 143h1v1h-1zM264 144h1v1h-1zM11 145h1v1h-1zM264 146h1v1h-1zM11 147h1v1h-1zM264 148h1v1h-1zM11 149h1v1h-1zM264 150h1v1h-1zM11 151h1v1h-1zM264 152h1v1h-1zM11 153h1v1h-1zM264 154h1v1h-1zM11 155h1v1h-1zM264 156h1v1h-1zM11 157h1v1h-1zM264 158h1v1h-1zM11 159h1v1h-1zM264 160h1v1h-1zM11 161h1v1h-1zM264 162h1v1h-1zM11 163h1v1h-1zM264 164h1v1h-1zM11 165h1v1h-1zM264 166h1v1h-1zM11 167h1v1h-1zM264 168h1v1h-1zM11 169h1v1h-1zM264 170h1v1h-1zM11 171h1v1h-1zM264 172h1v1h-1zM11 173h1v1h-1zM264 174h1v1h-1zM11 175h1v1h-1zM264 176h1v1h-1zM11 177h1v1h-1zM264 178h1v1h-1zM11 179h1v1h-1zM264 180h1v1h-1zM11 181h1v1h-1zM264 182h1v1h-1zM11 183h1v1h-1zM264 184h1v1h-1zM11 185h1v1h-1zM264 186h1v1h-1zM11 187h1v1h-1zM264 188h1v1h-1zM11 189h1v1h-1zM264 190h1v1h-1zM11 191h1v1h-1zM264 192h1v1h-1zM11 193h1v1h-1zM264 194h1v1h-1zM11 195h1v1h-1zM264 196h1v1h-1zM11 197h1v1h-1zM264 198h1v1h-1zM11 199h1v1h-1zM264 200h1v1h-1zM11 201h1v1h-1zM264 202h1v1h-1zM11 203h1v1h-1zM264 204h1v1h-1zM11 205h1v1h-1zM264 206h1v1h-1zM11 207h1v1h-1zM264 208h1v1h-1zM11 209h1v1h-1zM264 210h1v1h-1zM11 211h1v1h-1zM264 212h1v1h-1zM11 213h1v1h-1zM264 214h1v1h-1zM11 215h1v1h-1zM264 216h1v1h-1zM11 217h1v1h-1zM264 218h1v1h-1zM11 219h1v1h-1zM264 220h1v1h-1zM11 221h1v1h-1zM264 222h1v1h-1zM11 223h1v1h-1zM264 224h1v1h-1zM11 225h1v1h-1zM264 226h1v1h-1zM11 227h1v1h-1zM264 228h1v1h-1zM11 229h1v1h-1zM264 230h1v1h-1zM11 231h1v1h-1zM264 232h1v1h-1zM11 233h1v1h-1zM264 234h1v1h-1zM11 235h1v1h-1zM264 236h1v1h-1zM11 237h1v1h-1zM264 238h1v1h-1zM11 239h1v1h-1zM264 240h1v1h-1zM11 241h1v1h-1zM264 242h1v1h-1zM11 243h1v1h-1zM264 244h1v1h-1zM11 245h1v1h-1zM264 246h1v1h-1zM11 247h1v1h-1zM264 248h1v1h-1zM11 249h1v1h-1zM264 250h1v1h-1zM11 251h1v1h-1zM264 252h1v1h-1zM11 253h1v1h-1zM264 254h1v1h-1zM11 255h1v1h-1zM264 256h1v1h-1zM11 257h1v1h-1zM264 258h1v1h-1zM11 259h1v1h-1zM264 260h1v1h-1zM11 261h1v1h-1zM264 262h1v1h-1zM11 263h1v1h-1zM264 264h1v1h-1zM11 265h1v1h-1zM264 266h1v1h-1zM11 267h1v1h-1zM264 268h1v1h-1zM11 269h1v1h-1zM264 270h1v1h-1zM11 271h1v1h-1zM264 272h1v1h-1zM11 273h1v1h-1zM264 274h1v1h-1zM11 275h1v1h-1zM264 276h1v1h-1zM11 277h1v1h-1zM264 278h1v1h-1zM11 279h1v1h-1zM264 280h1v1h-1zM11 281h1v1h-1zM264 282h1v1h-1zM11 283h1v1h-1zM264 284h1v1h-1zM11 285h1v1h-1zM264 286h1v1h-1zM11 287h1v1h-1zM264 288h1v1h-1zM11 289h1v1h-1zM264 290h1v1h-1zM11 291h1v1h-1zM264 292h1v1h-1zM11 293h1v1h-1zM264 294h1v1h-1zM11 295h1v1h-1zM264 296h1v1h-1zM11 297h1v1h-1zM264 298h1v1h-1zM11 299h1v1h-1zM264 300h1v1h-1zM11 301h1v1h-1zM264 302h1v1h-1zM11 303h1v1h-1zM264 304h1v1h-1zM11 305h1v1h-1zM264 306h1v1h-1zM11 307h1v1h-1zM264 308h1v1h-1zM11 309h1v1h-1zM264 310h1v1h-1zM11 311h1v1h-1zM264 312h1v1h-1zM11 313h1v1h-1zM264 314h1v1h-1zM11 315h1v1h-1zM264 316h1v1h-1zM11 317h1v1h-1zM264 318h1v1h-1zM11 319h1v1h-1zM264 320h1v1h-1zM11 321h1v1h-1zM264 322h1v1h-1zM11 323h1v1h-1zM264 324h1v1h-1zM11 325h1v1h-1zM264 326h1v1h-1zM11 327h1v1h-1zM264 328h1v1h-1zM11 329h1v1h-1zM264 330h1v1h-1zM11 331h1v1h-1zM264 332h1v1h-1zM11 333h1v1h-1zM264 334h1v1h-1zM11 335h1v1h-1zM264 336h1v1h-1zM11 337h1v1h-1zM264 338h1v1h-1zM11 339h1v1h-1zM264 340h1v1h-1zM11 341h1v1h-1zM264 342h1v1h-1zM11 343h1v1h-1zM264 344h1v1h-1zM11 345h1v1h-1zM264 346h1v1h-1zM11 347h1v1h-1zM264 348h1v1h-1zM11 349h1v1h-1zM264 350h1v1h-1zM11 351h1v1h-1zM264 352h1v1h-1zM11 353h1v1h-1zM264 354h1v1h-1zM11 355h1v1h-1zM264 356h1v1h-1zM11 357h1v1h-1zM264 358h1v1h-1zM11 359h1v1h-1zM264 360h1v1h-1zM11 361h1v1h-1zM264 362h1v1h-1zM11 363h1v1h-1zM264 364h1v1h-1zM11 365h1v1h-1zM264 366h1v1h-1zM11 367h1v1h-1zM264 368h1v1h-1zM11 369h1v1h-1zM264 370h1v1h-1zM11 371h1v1h-1zM264 372h1v1h-1zM11 373h1v1h-1zM264 374h1v1h-1zM11 375h1v1h-1zM264 376h1v1h-1zM11 377h1v1h-1zM264 378h1v1h-1zM11 379h1v1h-1zM264 380h1v1h-1zM11 381h1v1h-1zM264 382h1v1h-1zM11 383h1v1h-1zM264 384h1v1h-1zM11 385h1v1h-1zM264 386h1v1h-1zM11 387h1v1h-1z" fill="#0000ff"/><rect x="12" y="12" width="112" height="48" fill="#fff"/><rect x="12" y="62" width="112" height="48" fill="#fff"/><rect x="12" y="112" width="112" height="48" fill="#fff"/><rect x="12" y="162" width="112" height="48" fill="#fff"/><rect x="12" y="212" width="112" height="48" fill="#fff"/><rect x="12" y="262" width="112" height="48" fill="#fff"/><rect x="12" y="312" width="112" height="48" fill="#fff"/><rect x="126" y="12" width="112" height="48" fill="#fff"/><rect x="126" y="62" width="112" height="48" fill="#fff"/><rect x="126" y="112" width="112" height="48" fill="#fff"/><rect x="126" y="162" width="112" height="48" fill="#fff"/><rect x="126" y="212" width="112" height="48" fill="#fff"/><rect x="126" y="262" width="112" height="48" fill="#fff"/><rect x="126" y="312" width="112" height="48" fill="#fff"/><path d="M14 11h108v1h-108zM14 60h108v1h-108zM11 14h1v44h-1zM124 14h1v44h-1zM12 14h1v1h-1zM12 13h1v1h-1zM12 12h1v1h-1zM13 12h1v1h-1zM14 12h1v1h-1zM123 14h1v1h-1zM123 13h1v1h-1zM123 12h1v1h-1zM122 12h1v1h-1zM121 12h1v1h-1zM12 57h1v1h-1zM12 58h1v1h-1zM12 59h1v1h-1zM13 59h1v1h-1zM14 59h1v1h-1zM123 57h1v1h-1zM123 58h1v1h-1zM123 59h1v1h-1zM122 59h1v1h-1zM121 59h1v1h-1zM14 61h108v1h-108zM14 110h108v1h-108zM11 64h1v44h-1zM124 64h1v44h-1zM12 64h1v1h-1zM12 63h1v1h-1zM12 62h1v1h-1zM13 62h1v1h-1zM14 62h1v1h-1zM123 64h1v1h-1zM123 63h1v1h-1zM123 62h1v1h-1zM122 62h1v1h-1zM121 62h1v1h-1zM12 107h1v1h-1zM12 108h1v1h-1zM12 109h1v1h-1zM13 109h1v1h-1zM14 109h1v1h-1zM123 107h1v1h-1zM123 108h1v1h-1zM123 109h1v1h-1zM122 109h1v1h-1zM121 109h1v1h-1zM14 111h108v1h-108zM14 160h108v1h-108zM11 114h1v44h-1zM124 114h1v44h-1zM12 114h1v1h-1zM12 113h1v1h-1zM12 112h1v1h-1zM13 112h1v1h-1zM14 112h1v1h-1zM123 114h1v1h-1zM123 113h1v1h-1zM123 112h1v1h-1zM122 112h1v1h-1zM121 112h1v1h-1zM12 157h1v1h-1zM12 158h1v1h-1zM12 159h1v1h-1zM13 159h1v1h-1zM14 159h1v1h-1zM123 157h1v1h-1zM123 158h1v1h-1zM123 159h1v1h-1zM122 159h1v1h-1zM121 159h1v1h-1zM14 161h108v1h-108zM14 210h108v1h-108zM11 164h1v44h-1zM124 164h1v44h-1zM12 164h1v1h-1zM12 163h1v1h-1zM12 162h1v1h-1zM13 162h1v1h-1zM14 162h1v1h-1zM123 164h1v1h-1zM123 163h1v1h-1zM123 162h1v1h-1zM122 162h1v1h-1zM121 162h1v1h-1zM12 207h1v1h-1zM12 208h1v1h-1zM12 209h1v1h-1zM13 209h1v1h-1zM14 209h1v1h-1zM123 207h1v1h-1zM123 208h1v1h-1zM123 209h1v1h-1zM122 209h1v1h-1zM121 209h1v1h-1zM14 211h108v1h-108zM14 260h108v1h-108zM11 214h1v44h-1zM124 214h1v44h-1zM12 214h1v1h-1zM12 213h1v1h-1zM12 212h1v1h-1zM13 212h1v1h-1zM14 212h1v1h-1zM123 214h1v1h-1zM123 213h1v1h-1zM123 212h1v1h-1zM122 212h1v1h-1zM121 212h1v1h-1zM12 257h1v1h-1zM12 258h1v1h-1zM12 259h1v1h-1zM13 259h1v1h-1zM14 259h1v1h-1zM123 257h1v1h-1zM123 258h1v1h-1zM123 259h1v1h-1zM122 259h1v1h-1zM121 259h1v1h-1zM14 261h108v1h-108zM14 310h108v1h-108zM11 264h1v44h-1zM124 264h1v44h-1zM12 264h1v1h-1zM12 263h1v1h-1zM12 262h1v1h-1zM13 262h1v1h-1zM14 262h1v1h-1zM123 264h1v1h-1zM123 263h1v1h-1zM123 262h1v1h-1zM122 262h1v1h-1zM121 262h1v1h-1zM12 307h1v1h-1zM12 308h1v1h-1zM12 309h1v1h-1zM13 309h1v1h-1zM14 309h1v1h-1zM123 307h1v1h-1zM123 308h1v1h-1zM123 309h1v1h-1zM122 309h1v1h-1zM121 309h1v1h-1zM14 311h108v1h-108zM14 360h108v1h-108zM11 314h1v44h-1zM124 314h1v44h-1zM12 314h1v1h-1zM12 313h1v1h-1zM12 312h1v1h-1zM13 312h1v1h-1zM14 312h1v1h-1zM123 314h1v1h-1zM123 313h1v1h-1zM123 312h1v1h-1zM122 312h1v1h-1zM121 312h1v1h-1zM12 357h1v1h-1zM12 358h1v1h-1zM12 359h1v1h-1zM13 359h1v1h-1zM14 359h1v1h-1zM123 357h1v1h-1zM123 358h1v1h-1zM123 359h1v1h-1zM122 359h1v1h-1zM121 359h1v1h-1zM128 11h108v1h-108zM128 60h108v1h-108zM125 14h1v44h-1zM238 14h1v44h-1zM126 14h1v1h-1zM126 13h1v1h-1zM126 12h1v1h-1zM127 12h1v1h-1zM128 12h1v1h-1zM237 14h1v1h-1zM237 13h1v1h-1zM237 12h1v1h-1zM236 12h1v1h-1zM235 12h1v1h-1zM126 57h1v1h-1zM126 58h1v1h-1zM126 59h1v1h-1zM127 59h1v1h-1zM128 59h1v1h-1zM237 57h1v1h-1zM237 58h1v1h-1zM237 59h1v1h-1zM236 59h1v1h-1zM235 59h1v1h-1zM128 61h108v1h-108zM128 110h108v1h-108zM125 64h1v44h-1zM238 64h1v44h-1zM126 64h1v1h-1zM126 63h1v1h-1zM126 62h1v1h-1zM127 62h1v1h-1zM128 62h1v1h-1zM237 64h1v1h-1zM237 63h1v1h-1zM237 62h1v1h-1zM236 62h1v1h-1zM235 62h1v1h-1zM126 107h1v1h-1zM126 108h1v1h-1zM126 109h1v1h-1zM127 109h1v1h-1zM128 109h1v1h-1zM237 107h1v1h-1zM237 108h1v1h-1zM237 109h1v1h-1zM236 109h1v1h-1zM235 109h1v1h-1zM128 111h108v1h-108zM128 160h108v1h-108zM125 114h1v44h-1zM238 114h1v44h-1zM126 114h1v1h-1zM126 113h1v1h-1zM126 112h1v1h-1zM127 112h1v1h-1zM128 112h1v1h-1zM237 114h1v1h-1zM237 113h1v1h-1zM237 112h1v1h-1zM236 112h1v1h-1zM235 112h1v1h-1zM126 157h1v1h-1zM126 158h1v1h-1zM126 159h1v1h-1zM127 159h1v1h-1zM128 159h1v1h-1zM237 157h1v1h-1zM237 158h1v1h-1zM237 159h1v1h-1zM236 159h1v1h-1zM235 159h1v1h-1zM128 161h108v1h-108zM128 210h108v1h-108zM125 164h1v44h-1zM238 164h1v44h-1zM126 164h1v1h-1zM126 163h1v1h-1zM126 162h1v1h-1zM127 162h1v1h-1zM128 162h1v1h-1zM237 164h1v1h-1zM237 163h1v1h-1zM237 162h1v1h-1zM236 162h1v1h-1zM235 162h1v1h-1zM126 207h1v1h-1zM126 208h1v1h-1zM126 209h1v1h-1zM127 209h1v1h-1zM128 209h1v1h-1zM237 207h1v1h-1zM237 208h1v1h-1zM237 209h1v1h-1zM236 209h1v1h-1zM235 209h1v1h-1zM128 211h108v1h-108zM128 260h108v1h-108zM125 214h1v44h-1zM238 214h1v44h-1zM126 214h1v1h-1zM126 213h1v1h-1zM126 212h1v1h-1zM127 212h1v1h-1zM128 212h1v1h-1zM237 214h1v1h-1zM237 213h1v1h-1zM237 212h1v1h-1zM236 212h1v1h-1zM235 212h1v1h-1zM126 257h1v1h-1zM126 258h1v1h-1zM126 259h1v1h-1zM127 259h1v1h-1zM128 259h1v1h-1zM237 257h1v1h-1zM237 258h1v1h-1zM237 259h1v1h-1zM236 259h1v1h-1zM235 259h1v1h-1zM128 261h108v1h-108zM128 310h108v1h-108zM125 264h1v44h-1zM238 264h1v44h-1zM126 264h1v1h-1zM126 263h1v1h-1zM126 262h1v1h-1zM127 262h1v1h-1zM128 262h1v1h-1zM237 264h1v1h-1zM237 263h1v1h-1zM237 262h1v1h-1zM236 262h1v1h-1zM235 262h1v1h-1zM126 307h1v1h-1zM126 308h1v1h-1zM126 309h1v1h-1zM127 309h1v1h-1zM128 309h1v1h-1zM237 307h1v1h-1zM237 308h1v1h-1zM237 309h1v1h-1zM236 309h1v1h-1zM235 309h1v1h-1zM128 311h108v1h-108zM128 360h108v1h-108zM125 314h1v44h-1zM238 314h1v44h-1zM126 314h1v1h-1zM126 313h1v1h-1zM126 312h1v1h-1zM127 312h1v1h-1zM128 312h1v1h-1zM237 314h1v1h-1zM237 313h1v1h-1zM237 312h1v1h-1zM236 312h1v1h-1zM235 312h1v1h-1zM126 357h1v1h-1zM126 358h1v1h-1zM126 359h1v1h-1zM127 359h1v1h-1zM128 359h1v1h-1zM237 357h1v1h-1zM237 358h1v1h-1zM237 359h1v1h-1zM236 359h1v1h-1zM235 359h1v1h-1z" fill="#000"/><path d="M66 35h1v1h-1zM65 36h1v1h-1zM66 36h1v1h-1zM64 37h1v1h-1zM66 37h1v1h-1zM66 38h1v1h-1zM66 39h1v1h-1zM66 40h1v1h-1zM66 41h1v1h-1zM179 35h1v1h-1zM180 35h1v1h-1zM178 36h1v1h-1zM181 36h1v1h-1zM181 37h1v1h-1zM180 38h1v1h-1zM179 39h1v1h-1zM178 40h1v1h-1zM178 41h1v1h-1zM179 41h1v1h-1zM180 41h1v1h-1zM181 41h1v1h-1zM65 85h1v1h-1zM66 85h1v1h-1zM64 86h1v1h-1zM67 86h1v1h-1zM67 87h1v1h-1zM65 88h1v1h-1zM66 88h1v1h-1zM67 89h1v1h-1zM64 90h1v1h-1zM67 90h1v1h-1zM65 91h1v1h-1zM66 91h1v1h-1zM181 85h1v1h-1zM180 86h1v1h-1zM181 86h1v1h-1zM179 87h1v1h-1zM181 87h1v1h-1zM179 88h1v1h-1zM181 88h1v1h-1zM178 89h1v1h-1zM181 89h1v1h-1zM178 90h1v1h-1zM179 90h1v1h-1zM180 90h1v1h-1zM181 90h1v1h-1zM182 90h1v1h-1zM181 91h1v1h-1zM65 135h1v1h-1zM66 135h1v1h-1zM67 135h1v1h-1zM65 136h1v1h-1zM64 137h1v1h-1zM65 137h1v1h-1zM66 137h1v1h-1zM67 138h1v1h-1zM67 139h1v1h-1zM64 140h1v1h-1zM67 140h1v1h-1zM65 141h1v1h-1zM66 141h1v1h-1zM179 135h1v1h-1zM180 135h1v1h-1zM178 136h1v1h-1zM181 136h1v1h-1zM178 137h1v1h-1zM178 138h1v1h-1zM179 138h1v1h-1zM180 138h1v1h-1zM178 139h1v1h-1zM181 139h1v1h-1zM178 140h1v1h-1zM181 140h1v1h-1zM179 141h1v1h-1zM180 141h1v1h-1zM64 185h1v1h-1zM65 185h1v1h-1zM66 185h1v1h-1zM67 185h1v1h-1zM67 186h1v1h-1zM66 187h1v1h-1zM66 188h1v1h-1zM65 189h1v1h-1zM65 190h1v1h-1zM65 191h1v1h-1zM179 185h1v1h-1zM180 185h1v1h-1zM178 186h1v1h-1zM181 186h1v1h-1zM178 187h1v1h-1zM181 187h1v1h-1zM179 188h1v1h-1zM180 188h1v1h-1zM178 189h1v1h-1zM181 189h1v1h-1zM178 190h1v1h-1zM181 190h1v1h-1zM179 191h1v1h-1zM180 191h1v1h-1zM65 235h1v1h-1zM66 235h1v1h-1zM64 236h1v1h-1zM67 236h1v1h-1zM64 237h1v1h-1zM67 237h1v1h-1zM65 238h1v1h-1zM66 238h1v1h-1zM67 238h1v1h-1zM67 239h1v1h-1zM64 240h1v1h-1zM67 240h1v1h-1zM65 241h1v1h-1zM66 241h1v1h-1zM180 235h1v1h-1zM179 236h1v1h-1zM180 236h1v1h-1zM178 237h1v1h-1zM180 237h1v1h-1zM180 238h1v1h-1zM180 239h1v1h-1zM180 240h1v1h-1zM180 241h1v1h-1zM184 235h1v1h-1zM185 235h1v1h-1zM183 236h1v1h-1zM186 236h1v1h-1zM183 237h1v1h-1zM186 237h1v1h-1zM183 238h1v1h-1zM186 238h1v1h-1zM183 239h1v1h-1zM186 239h1v1h-1zM183 240h1v1h-1zM186 240h1v1h-1zM184 241h1v1h-1zM185 241h1v1h-1zM66 285h1v1h-1zM65 286h1v1h-1zM66 286h1v1h-1zM64 287h1v1h-1zM66 287h1v1h-1zM66 288h1v1h-1zM66 289h1v1h-1zM66 290h1v1h-1zM66 291h1v1h-1zM71 285h1v1h-1zM70 286h1v1h-1zM71 286h1v1h-1zM69 287h1v1h-1zM71 287h1v1h-1zM71 288h1v1h-1zM71 289h1v1h-1zM71 290h1v1h-1zM71 291h1v1h-1zM180 285h1v1h-1zM179 286h1v1h-1zM180 286h1v1h-1zM178 287h1v1h-1zM180 287h1v1h-1zM180 288h1v1h-1zM180 289h1v1h-1zM180 290h1v1h-1zM180 291h1v1h-1zM184 285h1v1h-1zM185 285h1v1h-1zM183 286h1v1h-1zM186 286h1v1h-1zM186 287h1v1h-1zM185 288h1v1h-1zM184 289h1v1h-1zM183 290h1v1h-1zM183 291h1v1h-1zM184 291h1v1h-1zM185 291h1v1h-1zM186 291h1v1h-1zM66 335h1v1h-1zM65 336h1v1h-1zM66 336h1v1h-1zM64 337h1v1h-1zM66 337h1v1h-1zM66 338h1v1h-1zM66 339h1v1h-1zM66 340h1v1h-1zM66 341h1v1h-1zM70 335h1v1h-1zM71 335h1v1h-1zM69 336h1v1h-1zM72 336h1v1h-1zM72 337h1v1h-1zM70 338h1v1h-1zM71 338h1v1h-1zM72 339h1v1h-1zM69 340h1v1h-1zM72 340h1v1h-1zM70 341h1v1h-1zM71 341h1v1h-1zM180 335h1v1h-1zM179 336h1v1h-1zM180 336h1v1h-1zM178 337h1v1h-1zM180 337h1v1h-1zM180 338h1v1h-1zM180 339h1v1h-1zM180 340h1v1h-1zM180 341h1v1h-1zM186 335h1v1h-1zM185 336h1v1h-1zM186 336h1v1h-1zM184 337h1v1h-1zM186 337h1v1h-1zM184 338h1v1h-1zM186 338h1v1h-1zM183 339h1v1h-1zM186 339h1v1h-1zM183 340h1v1h-1zM184 340h1v1h-1zM185 340h1v1h-1zM186 340h1v1h-1zM187 340h1v1h-1zM186 341h1v1h-1z" fill="#000"/></svg>

</body></html>
